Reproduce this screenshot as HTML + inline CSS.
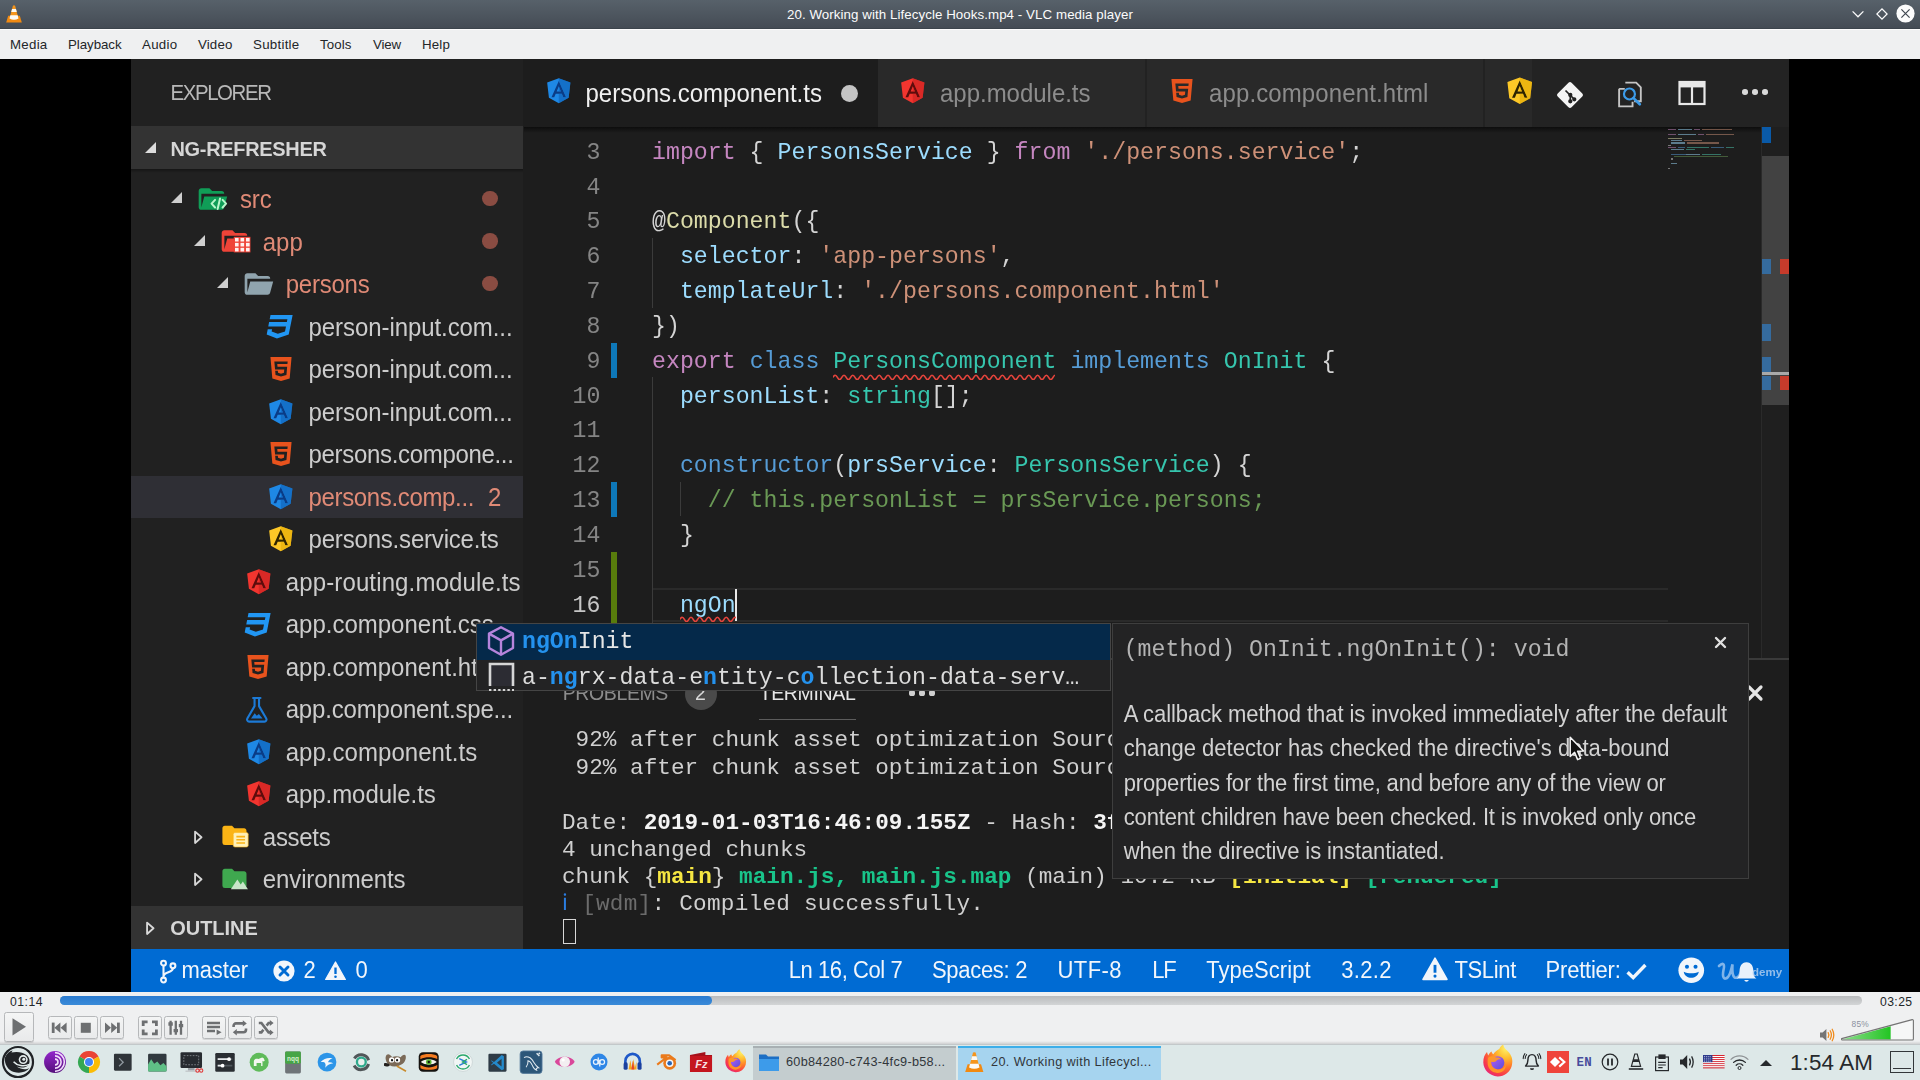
<!DOCTYPE html>
<html><head><meta charset="utf-8"><title>VLC</title>
<style>
html,body{margin:0;padding:0;background:#000;}
body{width:1920px;height:1080px;position:relative;overflow:hidden;font-family:"Liberation Sans",sans-serif;}
svg{position:absolute;overflow:visible}
#w{position:absolute;left:0;top:0;width:1920px;height:1080px;overflow:hidden;will-change:transform;filter:blur(.55px);clip-path:inset(59px 0 88px 0);}
</style></head><body>
<div style="position:absolute;left:0px;top:0px;width:1920px;height:29px;background:linear-gradient(#57616a,#444b54);"></div>
<div style="position:absolute;left:0px;top:29px;width:1920px;height:30px;background:#eff0f1;"></div>
<div style="position:absolute;left:0px;top:29px;width:1920px;height:1px;background:#fbfbfb;"></div>
<span style="position:absolute;left:787px;top:7.74px;font:400 13.3px/1 'Liberation Sans',sans-serif;color:#fcfcfc;white-space:pre;letter-spacing:0.074px;">20. Working with Lifecycle Hooks.mp4 - VLC media player</span>
<span style="position:absolute;left:10px;top:37.74px;font:400 13.3px/1 'Liberation Sans',sans-serif;color:#232629;white-space:pre;letter-spacing:0.256px;">Media</span>
<span style="position:absolute;left:68px;top:37.74px;font:400 13.3px/1 'Liberation Sans',sans-serif;color:#232629;white-space:pre;letter-spacing:-0.059px;">Playback</span>
<span style="position:absolute;left:142px;top:37.74px;font:400 13.3px/1 'Liberation Sans',sans-serif;color:#232629;white-space:pre;letter-spacing:0.297px;">Audio</span>
<span style="position:absolute;left:198px;top:37.74px;font:400 13.3px/1 'Liberation Sans',sans-serif;color:#232629;white-space:pre;letter-spacing:0.144px;">Video</span>
<span style="position:absolute;left:253px;top:37.74px;font:400 13.3px/1 'Liberation Sans',sans-serif;color:#232629;white-space:pre;letter-spacing:0.268px;">Subtitle</span>
<span style="position:absolute;left:320px;top:37.74px;font:400 13.3px/1 'Liberation Sans',sans-serif;color:#232629;white-space:pre;letter-spacing:0.091px;">Tools</span>
<span style="position:absolute;left:373px;top:37.74px;font:400 13.3px/1 'Liberation Sans',sans-serif;color:#232629;white-space:pre;letter-spacing:-0.148px;">View</span>
<span style="position:absolute;left:422px;top:37.74px;font:400 13.3px/1 'Liberation Sans',sans-serif;color:#232629;white-space:pre;letter-spacing:0.160px;">Help</span>
<div id="w">
<div style="position:absolute;left:131px;top:59px;width:1658px;height:933px;background:#1d1d1d;"></div>
<div style="position:absolute;left:131px;top:59px;width:392.3px;height:891px;background:#212121;"></div>
<span style="position:absolute;left:170.5px;top:83.13px;font:400 20.4px/1 'Liberation Sans',sans-serif;color:#b8b8b8;white-space:pre;letter-spacing:-1.383px;transform:scaleY(1.05);transform-origin:0 84.65%;">EXPLORER</span>
<div style="position:absolute;left:131px;top:126px;width:392.3px;height:43px;background:#333333;"></div>
<div style="position:absolute;left:131px;top:169px;width:392.3px;height:4px;background:linear-gradient(rgba(0,0,0,.35),rgba(0,0,0,0));"></div>
<svg style="left:145px;top:141.7px;" width="11" height="11" viewBox="0 0 10 10"><path d="M10 0 V10 H0Z" fill="#dcdcdc"/></svg>
<span style="position:absolute;left:170.5px;top:139.37px;font:700 20px/1 'Liberation Sans',sans-serif;color:#d6d6d6;white-space:pre;letter-spacing:-0.335px;transform:scaleY(1.05);transform-origin:0 84.65%;">NG-REFRESHER</span>
<div style="position:absolute;left:131px;top:475.5px;width:392.3px;height:42px;background:#2f2f35;"></div>
<svg style="left:171.0px;top:192.3px;" width="11" height="11" viewBox="0 0 10 10"><path d="M10 0 V10 H0Z" fill="#cfcfcf"/></svg>
<svg style="left:196.01258840169731px;top:182.92517680339463px;" width="34.93635077793493" height="32.248939179632245" viewBox="0 0 26 24"><path d="M19 20 H4 C2.89 20 2 19.1 2 18 V6 C2 4.89 2.89 4 4 4 H10 L12 6 H19 A2 2 0 0 1 21 8 H4 V18 L6.14 10 H23.21 L20.93 18.5 C20.7 19.37 19.92 20 19 20Z" fill="#109d57"/><g fill="none" stroke="#b9f6ca" stroke-width="1.5" stroke-linecap="round" stroke-linejoin="round"><path d="M14.2 12.6 L11.6 15.4 14.2 18.2"/><path d="M19.8 12.6 L22.4 15.4 19.8 18.2"/><path d="M17.9 11.6 L16.1 19.4"/></g></svg>
<div style="position:absolute;left:482px;top:190.60000000000002px;width:15.6px;height:15.6px;background:#8a4c42;border-radius:50%"></div>
<span style="position:absolute;left:240.0px;top:187.98px;font:400 24px/1 'Liberation Sans',sans-serif;color:#e08a76;white-space:pre;letter-spacing:-0.167px;transform:scaleY(1.05);transform-origin:0 84.65%;">src</span>
<svg style="left:193.85000000000002px;top:234.83px;" width="11" height="11" viewBox="0 0 10 10"><path d="M10 0 V10 H0Z" fill="#cfcfcf"/></svg>
<svg style="left:218.86258840169734px;top:225.45517680339464px;" width="34.93635077793493" height="32.248939179632245" viewBox="0 0 26 24"><path d="M19 20 H4 C2.89 20 2 19.1 2 18 V6 C2 4.89 2.89 4 4 4 H10 L12 6 H19 A2 2 0 0 1 21 8 H4 V18 L6.14 10 H23.21 L20.93 18.5 C20.7 19.37 19.92 20 19 20Z" fill="#ef4438"/><rect x="11" y="8.8" width="12.4" height="11.6" fill="#ef4438"/><rect x="11.9" y="9.6" width="2.7" height="2.7" fill="#fff0ee"/><rect x="11.9" y="13.3" width="2.7" height="2.7" fill="#fff0ee"/><rect x="11.9" y="17.0" width="2.7" height="2.7" fill="#fff0ee"/><rect x="16.0" y="9.6" width="2.7" height="2.7" fill="#fff0ee"/><rect x="16.0" y="13.3" width="2.7" height="2.7" fill="#fff0ee"/><rect x="16.0" y="17.0" width="2.7" height="2.7" fill="#fff0ee"/><rect x="20.1" y="9.6" width="2.7" height="2.7" fill="#fff0ee"/><rect x="20.1" y="13.3" width="2.7" height="2.7" fill="#fff0ee"/><rect x="20.1" y="17.0" width="2.7" height="2.7" fill="#fff0ee"/></svg>
<div style="position:absolute;left:482px;top:233.13000000000002px;width:15.6px;height:15.6px;background:#8a4c42;border-radius:50%"></div>
<span style="position:absolute;left:262.85px;top:230.51px;font:400 24px/1 'Liberation Sans',sans-serif;color:#e08a76;white-space:pre;letter-spacing:-0.082px;transform:scaleY(1.05);transform-origin:0 84.65%;">app</span>
<svg style="left:216.7px;top:277.36px;" width="11" height="11" viewBox="0 0 10 10"><path d="M10 0 V10 H0Z" fill="#cfcfcf"/></svg>
<svg style="left:241.7125884016973px;top:267.98517680339467px;" width="34.93635077793493" height="32.248939179632245" viewBox="0 0 26 24"><path d="M19 20 H4 C2.89 20 2 19.1 2 18 V6 C2 4.89 2.89 4 4 4 H10 L12 6 H19 A2 2 0 0 1 21 8 H4 V18 L6.14 10 H23.21 L20.93 18.5 C20.7 19.37 19.92 20 19 20Z" fill="#90a4ae"/></svg>
<div style="position:absolute;left:482px;top:275.66px;width:15.6px;height:15.6px;background:#8a4c42;border-radius:50%"></div>
<span style="position:absolute;left:285.7px;top:273.04px;font:400 24px/1 'Liberation Sans',sans-serif;color:#e08a76;white-space:pre;letter-spacing:-0.227px;transform:scaleY(1.05);transform-origin:0 84.65%;">persons</span>
<svg style="left:264.36055555555555px;top:310.9733333333333px;" width="31.333333333333336" height="31.333333333333336" viewBox="0 0 24 24"><path d="M5 3 L4.35 6.34 H17.94 L17.5 8.5 H3.92 L3.26 11.83 H16.85 L16.09 15.64 10.61 17.45 5.86 15.64 6.19 14 H2.85 L2.06 18 9.91 21 18.96 18 20.16 11.97 20.4 10.76 21.94 3Z" fill="#2196f3"/></svg>
<span style="position:absolute;left:308.55px;top:315.57px;font:400 24px/1 'Liberation Sans',sans-serif;color:#cccccc;white-space:pre;letter-spacing:-0.076px;transform:scaleY(1.05);transform-origin:0 84.65%;">person-input.com...</span>
<svg style="left:265.12333333333333px;top:352.92px;" width="32.0" height="32.0" viewBox="0 0 24 24"><path d="M4.07 3 H19.93 L18.5 19.2 12 21 5.5 19.2Z M12 17.56 L16.07 16.43 16.62 10.33 H9.38 L9.2 8.3 H16.8 L17 6.31 H7 L7.56 12.32 H14.45 L14.22 14.9 12 15.5 9.78 14.9 9.64 13.24 H7.64 L7.93 16.43Z" fill="#e8531d" fill-rule="evenodd"/></svg>
<span style="position:absolute;left:308.55px;top:358.10px;font:400 24px/1 'Liberation Sans',sans-serif;color:#cccccc;white-space:pre;letter-spacing:-0.076px;transform:scaleY(1.05);transform-origin:0 84.65%;">person-input.com...</span>
<svg style="left:265.39210526315793px;top:395.6605263157895px;" width="31.578947368421055" height="31.578947368421055" viewBox="0 0 24 24"><path d="M12 3.5 L19.8 6.3 18.6 16.8 12 20.4 5.4 16.8 4.2 6.3Z" fill="#0a3c86"/><path d="M12 2.5 L20.84 5.65 19.5 17.35 12 21.5 4.5 17.35 3.16 5.65Z M12 4.6 L6.47 17 H8.53 L9.64 14.22 H14.34 L15.45 17 H17.5Z M13.62 12.5 H10.39 L12 8.63Z" fill="#1e88e5" fill-rule="evenodd"/><path d="M12 2.5 L20.84 5.65 19.5 17.35 12 21.5 V17 h5.5 L12 4.6Z M12 8.63 L13.62 12.5 H12Z M12 14.22 h2.34 L15.45 17 H12Z" fill="#0d5cb0" fill-rule="evenodd" opacity=".55"/></svg>
<span style="position:absolute;left:308.55px;top:400.63px;font:400 24px/1 'Liberation Sans',sans-serif;color:#cccccc;white-space:pre;letter-spacing:-0.076px;transform:scaleY(1.05);transform-origin:0 84.65%;">person-input.com...</span>
<svg style="left:265.12333333333333px;top:437.98px;" width="32.0" height="32.0" viewBox="0 0 24 24"><path d="M4.07 3 H19.93 L18.5 19.2 12 21 5.5 19.2Z M12 17.56 L16.07 16.43 16.62 10.33 H9.38 L9.2 8.3 H16.8 L17 6.31 H7 L7.56 12.32 H14.45 L14.22 14.9 12 15.5 9.78 14.9 9.64 13.24 H7.64 L7.93 16.43Z" fill="#e8531d" fill-rule="evenodd"/></svg>
<span style="position:absolute;left:308.55px;top:443.16px;font:400 24px/1 'Liberation Sans',sans-serif;color:#cccccc;white-space:pre;letter-spacing:-0.322px;transform:scaleY(1.05);transform-origin:0 84.65%;">persons.compone...</span>
<svg style="left:265.39210526315793px;top:480.7205263157895px;" width="31.578947368421055" height="31.578947368421055" viewBox="0 0 24 24"><path d="M12 3.5 L19.8 6.3 18.6 16.8 12 20.4 5.4 16.8 4.2 6.3Z" fill="#0a3c86"/><path d="M12 2.5 L20.84 5.65 19.5 17.35 12 21.5 4.5 17.35 3.16 5.65Z M12 4.6 L6.47 17 H8.53 L9.64 14.22 H14.34 L15.45 17 H17.5Z M13.62 12.5 H10.39 L12 8.63Z" fill="#1e88e5" fill-rule="evenodd"/><path d="M12 2.5 L20.84 5.65 19.5 17.35 12 21.5 V17 h5.5 L12 4.6Z M12 8.63 L13.62 12.5 H12Z M12 14.22 h2.34 L15.45 17 H12Z" fill="#0d5cb0" fill-rule="evenodd" opacity=".55"/></svg>
<span style="position:absolute;left:308.55px;top:485.69px;font:400 24px/1 'Liberation Sans',sans-serif;color:#e08a76;white-space:pre;letter-spacing:-0.350px;transform:scaleY(1.05);transform-origin:0 84.65%;">persons.comp...</span>
<svg style="left:265.39210526315793px;top:523.2505263157894px;" width="31.578947368421055" height="31.578947368421055" viewBox="0 0 24 24"><path d="M12 3.5 L19.8 6.3 18.6 16.8 12 20.4 5.4 16.8 4.2 6.3Z" fill="#2e2400"/><path d="M12 2.5 L20.84 5.65 19.5 17.35 12 21.5 4.5 17.35 3.16 5.65Z M12 4.6 L6.47 17 H8.53 L9.64 14.22 H14.34 L15.45 17 H17.5Z M13.62 12.5 H10.39 L12 8.63Z" fill="#fdc827" fill-rule="evenodd"/><path d="M12 2.5 L20.84 5.65 19.5 17.35 12 21.5 V17 h5.5 L12 4.6Z M12 8.63 L13.62 12.5 H12Z M12 14.22 h2.34 L15.45 17 H12Z" fill="#e0a800" fill-rule="evenodd" opacity=".55"/></svg>
<span style="position:absolute;left:308.55px;top:528.22px;font:400 24px/1 'Liberation Sans',sans-serif;color:#cccccc;white-space:pre;letter-spacing:-0.189px;transform:scaleY(1.05);transform-origin:0 84.65%;">persons.service.ts</span>
<svg style="left:242.54210526315788px;top:565.7805263157894px;" width="31.578947368421055" height="31.578947368421055" viewBox="0 0 24 24"><path d="M12 3.5 L19.8 6.3 18.6 16.8 12 20.4 5.4 16.8 4.2 6.3Z" fill="#5e0c0c"/><path d="M12 2.5 L20.84 5.65 19.5 17.35 12 21.5 4.5 17.35 3.16 5.65Z M12 4.6 L6.47 17 H8.53 L9.64 14.22 H14.34 L15.45 17 H17.5Z M13.62 12.5 H10.39 L12 8.63Z" fill="#f2352f" fill-rule="evenodd"/><path d="M12 2.5 L20.84 5.65 19.5 17.35 12 21.5 V17 h5.5 L12 4.6Z M12 8.63 L13.62 12.5 H12Z M12 14.22 h2.34 L15.45 17 H12Z" fill="#c41f1f" fill-rule="evenodd" opacity=".55"/></svg>
<span style="position:absolute;left:285.7px;top:570.75px;font:400 24px/1 'Liberation Sans',sans-serif;color:#cccccc;white-space:pre;letter-spacing:0.136px;transform:scaleY(1.05);transform-origin:0 84.65%;">app-routing.module.ts</span>
<svg style="left:241.51055555555556px;top:608.6833333333334px;" width="31.333333333333336" height="31.333333333333336" viewBox="0 0 24 24"><path d="M5 3 L4.35 6.34 H17.94 L17.5 8.5 H3.92 L3.26 11.83 H16.85 L16.09 15.64 10.61 17.45 5.86 15.64 6.19 14 H2.85 L2.06 18 9.91 21 18.96 18 20.16 11.97 20.4 10.76 21.94 3Z" fill="#2196f3"/></svg>
<span style="position:absolute;left:285.7px;top:613.28px;font:400 24px/1 'Liberation Sans',sans-serif;color:#cccccc;white-space:pre;transform:scaleY(1.05);transform-origin:0 84.65%;">app.component.css</span>
<svg style="left:242.2733333333333px;top:650.6300000000001px;" width="32.0" height="32.0" viewBox="0 0 24 24"><path d="M4.07 3 H19.93 L18.5 19.2 12 21 5.5 19.2Z M12 17.56 L16.07 16.43 16.62 10.33 H9.38 L9.2 8.3 H16.8 L17 6.31 H7 L7.56 12.32 H14.45 L14.22 14.9 12 15.5 9.78 14.9 9.64 13.24 H7.64 L7.93 16.43Z" fill="#e8531d" fill-rule="evenodd"/></svg>
<span style="position:absolute;left:285.7px;top:655.81px;font:400 24px/1 'Liberation Sans',sans-serif;color:#cccccc;white-space:pre;transform:scaleY(1.05);transform-origin:0 84.65%;">app.component.html</span>
<svg style="left:241.43684210526314px;top:693.7652631578948px;" width="31.578947368421055" height="31.578947368421055" viewBox="0 0 24 24"><path d="M9.2 3 H14.8 M10.3 3 V9.2 L4.8 18.6 A1.6 1.6 0 0 0 6.2 21 H17.8 A1.6 1.6 0 0 0 19.2 18.6 L13.7 9.2 V3" fill="none" stroke="#1c7ad6" stroke-width="1.6" stroke-linejoin="round" stroke-linecap="round"/><path d="M7.6 18.6 L10.4 14.6 12 16.6 13.6 15.2 16.4 18.6Z" fill="#1c7ad6"/></svg>
<span style="position:absolute;left:285.7px;top:698.34px;font:400 24px/1 'Liberation Sans',sans-serif;color:#cccccc;white-space:pre;letter-spacing:-0.171px;transform:scaleY(1.05);transform-origin:0 84.65%;">app.component.spe...</span>
<svg style="left:242.54210526315788px;top:735.9005263157895px;" width="31.578947368421055" height="31.578947368421055" viewBox="0 0 24 24"><path d="M12 3.5 L19.8 6.3 18.6 16.8 12 20.4 5.4 16.8 4.2 6.3Z" fill="#0a3c86"/><path d="M12 2.5 L20.84 5.65 19.5 17.35 12 21.5 4.5 17.35 3.16 5.65Z M12 4.6 L6.47 17 H8.53 L9.64 14.22 H14.34 L15.45 17 H17.5Z M13.62 12.5 H10.39 L12 8.63Z" fill="#1e88e5" fill-rule="evenodd"/><path d="M12 2.5 L20.84 5.65 19.5 17.35 12 21.5 V17 h5.5 L12 4.6Z M12 8.63 L13.62 12.5 H12Z M12 14.22 h2.34 L15.45 17 H12Z" fill="#0d5cb0" fill-rule="evenodd" opacity=".55"/></svg>
<span style="position:absolute;left:285.7px;top:740.87px;font:400 24px/1 'Liberation Sans',sans-serif;color:#cccccc;white-space:pre;letter-spacing:0.044px;transform:scaleY(1.05);transform-origin:0 84.65%;">app.component.ts</span>
<svg style="left:242.54210526315788px;top:778.4305263157895px;" width="31.578947368421055" height="31.578947368421055" viewBox="0 0 24 24"><path d="M12 3.5 L19.8 6.3 18.6 16.8 12 20.4 5.4 16.8 4.2 6.3Z" fill="#5e0c0c"/><path d="M12 2.5 L20.84 5.65 19.5 17.35 12 21.5 4.5 17.35 3.16 5.65Z M12 4.6 L6.47 17 H8.53 L9.64 14.22 H14.34 L15.45 17 H17.5Z M13.62 12.5 H10.39 L12 8.63Z" fill="#f2352f" fill-rule="evenodd"/><path d="M12 2.5 L20.84 5.65 19.5 17.35 12 21.5 V17 h5.5 L12 4.6Z M12 8.63 L13.62 12.5 H12Z M12 14.22 h2.34 L15.45 17 H12Z" fill="#c41f1f" fill-rule="evenodd" opacity=".55"/></svg>
<span style="position:absolute;left:285.7px;top:783.40px;font:400 24px/1 'Liberation Sans',sans-serif;color:#cccccc;white-space:pre;letter-spacing:-0.059px;transform:scaleY(1.05);transform-origin:0 84.65%;">app.module.ts</span>
<svg style="left:194.05px;top:829.95px;" width="8.6" height="14.6" viewBox="0 0 8 13"><path d="M1 1.2 L7 6.5 1 11.8Z" fill="none" stroke="#d6d6d6" stroke-width="1.7" stroke-linejoin="round"/></svg>
<svg style="left:219.74090909090913px;top:821.4318181818181px;" width="31.31818181818182" height="28.90909090909091" viewBox="0 0 26 24"><path d="M10 4 H4 C2.89 4 2 4.89 2 6 V18 A2 2 0 0 0 4 20 H20 A2 2 0 0 0 22 18 V8 C22 6.89 21.1 6 20 6 H12Z" fill="#fbb415"/><rect x="11" y="9.6" width="12.4" height="12" rx="1.4" fill="#fff1b8" stroke="#fbb415" stroke-width=".5"/><path d="M13.6 13 h7.2 M13.6 15.6 h7.2 M13.6 18.2 h7.2" stroke="#fbb415" stroke-width="1.3"/></svg>
<span style="position:absolute;left:262.85px;top:825.93px;font:400 24px/1 'Liberation Sans',sans-serif;color:#cccccc;white-space:pre;letter-spacing:-0.312px;transform:scaleY(1.05);transform-origin:0 84.65%;">assets</span>
<svg style="left:194.05px;top:872.48px;" width="8.6" height="14.6" viewBox="0 0 8 13"><path d="M1 1.2 L7 6.5 1 11.8Z" fill="none" stroke="#d6d6d6" stroke-width="1.7" stroke-linejoin="round"/></svg>
<svg style="left:219.74090909090913px;top:863.9618181818181px;" width="31.31818181818182" height="28.90909090909091" viewBox="0 0 26 24"><path d="M10 4 H4 C2.89 4 2 4.89 2 6 V18 A2 2 0 0 0 4 20 H20 A2 2 0 0 0 22 18 V8 C22 6.89 21.1 6 20 6 H12Z" fill="#3fa84f"/><path d="M9 21 L14.4 12.8 17.2 17 19 14.6 23.2 21Z" fill="#c8e6c9"/></svg>
<span style="position:absolute;left:262.85px;top:868.46px;font:400 24px/1 'Liberation Sans',sans-serif;color:#cccccc;white-space:pre;letter-spacing:-0.132px;transform:scaleY(1.05);transform-origin:0 84.65%;">environments</span>
<span style="position:absolute;left:488px;top:485.69px;font:400 24px/1 'Liberation Sans',sans-serif;color:#e08a76;white-space:pre;letter-spacing:-1.859px;transform:scaleY(1.05);transform-origin:0 84.65%;">2</span>
<div style="position:absolute;left:131px;top:906px;width:392.3px;height:44px;background:#333333;"></div>
<svg style="left:145.6px;top:920.8px;" width="8.6" height="14.6" viewBox="0 0 8 13"><path d="M1 1.2 L7 6.5 1 11.8Z" fill="none" stroke="#dadada" stroke-width="1.7" stroke-linejoin="round"/></svg>
<span style="position:absolute;left:170.2px;top:918.07px;font:700 20px/1 'Liberation Sans',sans-serif;color:#d6d6d6;white-space:pre;letter-spacing:-0.026px;transform:scaleY(1.05);transform-origin:0 84.65%;">OUTLINE</span>
<div style="position:absolute;left:524px;top:59px;width:1265px;height:68px;background:#262626;"></div>
<div style="position:absolute;left:524px;top:59px;width:354px;height:68px;background:#1d1d1d;"></div>
<div style="position:absolute;left:878px;top:59px;width:268px;height:68px;background:#292929;"></div>
<div style="position:absolute;left:1146px;top:59px;width:338px;height:68px;background:#292929;"></div>
<div style="position:absolute;left:1484px;top:59px;width:48px;height:68px;background:#292929;"></div>
<div style="position:absolute;left:1145px;top:59px;width:1.5px;height:68px;background:#222;"></div>
<div style="position:absolute;left:1483px;top:59px;width:1.5px;height:68px;background:#222;"></div>
<div style="position:absolute;left:1532px;top:59px;width:257px;height:68px;background:#232323;"></div>
<svg style="left:542.8421052631579px;top:75.21052631578948px;" width="31.578947368421055" height="31.578947368421055" viewBox="0 0 24 24"><path d="M12 3.5 L19.8 6.3 18.6 16.8 12 20.4 5.4 16.8 4.2 6.3Z" fill="#0a3c86"/><path d="M12 2.5 L20.84 5.65 19.5 17.35 12 21.5 4.5 17.35 3.16 5.65Z M12 4.6 L6.47 17 H8.53 L9.64 14.22 H14.34 L15.45 17 H17.5Z M13.62 12.5 H10.39 L12 8.63Z" fill="#1e88e5" fill-rule="evenodd"/><path d="M12 2.5 L20.84 5.65 19.5 17.35 12 21.5 V17 h5.5 L12 4.6Z M12 8.63 L13.62 12.5 H12Z M12 14.22 h2.34 L15.45 17 H12Z" fill="#0d5cb0" fill-rule="evenodd" opacity=".55"/></svg>
<span style="position:absolute;left:585.5px;top:81.98px;font:400 24px/1 'Liberation Sans',sans-serif;color:#f0f0f0;white-space:pre;letter-spacing:0.018px;transform:scaleY(1.05);transform-origin:0 84.65%;">persons.component.ts</span>
<div style="position:absolute;left:841px;top:84.5px;width:17px;height:17px;background:#c4c4c4;border-radius:50%"></div>
<svg style="left:896.8421052631579px;top:75.21052631578948px;" width="31.578947368421055" height="31.578947368421055" viewBox="0 0 24 24"><path d="M12 3.5 L19.8 6.3 18.6 16.8 12 20.4 5.4 16.8 4.2 6.3Z" fill="#5e0c0c"/><path d="M12 2.5 L20.84 5.65 19.5 17.35 12 21.5 4.5 17.35 3.16 5.65Z M12 4.6 L6.47 17 H8.53 L9.64 14.22 H14.34 L15.45 17 H17.5Z M13.62 12.5 H10.39 L12 8.63Z" fill="#f2352f" fill-rule="evenodd"/><path d="M12 2.5 L20.84 5.65 19.5 17.35 12 21.5 V17 h5.5 L12 4.6Z M12 8.63 L13.62 12.5 H12Z M12 14.22 h2.34 L15.45 17 H12Z" fill="#c41f1f" fill-rule="evenodd" opacity=".55"/></svg>
<span style="position:absolute;left:940px;top:81.98px;font:400 24px/1 'Liberation Sans',sans-serif;color:#8c8c8c;white-space:pre;letter-spacing:-0.020px;transform:scaleY(1.05);transform-origin:0 84.65%;">app.module.ts</span>
<svg style="left:1165.5733333333333px;top:75.0px;" width="32.0" height="32.0" viewBox="0 0 24 24"><path d="M4.07 3 H19.93 L18.5 19.2 12 21 5.5 19.2Z M12 17.56 L16.07 16.43 16.62 10.33 H9.38 L9.2 8.3 H16.8 L17 6.31 H7 L7.56 12.32 H14.45 L14.22 14.9 12 15.5 9.78 14.9 9.64 13.24 H7.64 L7.93 16.43Z" fill="#e8531d" fill-rule="evenodd"/></svg>
<span style="position:absolute;left:1209px;top:81.98px;font:400 24px/1 'Liberation Sans',sans-serif;color:#8c8c8c;white-space:pre;letter-spacing:0.113px;transform:scaleY(1.05);transform-origin:0 84.65%;">app.component.html</span>
<svg style="left:1503.0926315789475px;top:73.51315789473685px;" width="33.473684210526315" height="33.473684210526315" viewBox="0 0 24 24"><path d="M12 3.5 L19.8 6.3 18.6 16.8 12 20.4 5.4 16.8 4.2 6.3Z" fill="#2e2400"/><path d="M12 2.5 L20.84 5.65 19.5 17.35 12 21.5 4.5 17.35 3.16 5.65Z M12 4.6 L6.47 17 H8.53 L9.64 14.22 H14.34 L15.45 17 H17.5Z M13.62 12.5 H10.39 L12 8.63Z" fill="#fdc827" fill-rule="evenodd"/><path d="M12 2.5 L20.84 5.65 19.5 17.35 12 21.5 V17 h5.5 L12 4.6Z M12 8.63 L13.62 12.5 H12Z M12 14.22 h2.34 L15.45 17 H12Z" fill="#e0a800" fill-rule="evenodd" opacity=".55"/></svg>
<svg style="left:1555px;top:80px;" width="30" height="30" viewBox="0 0 30 30"><rect x="5.2" y="5.2" width="19.6" height="19.6" rx="2.2" transform="rotate(45 15 15)" fill="#f4f4f4"/><g stroke="#232323" stroke-width="1.7" fill="#232323"><path d="M10.5 10.5 L19.5 19.5" /><path d="M15.3 15 V21.5"/><circle cx="15.3" cy="15" r="1.3"/><circle cx="15.3" cy="21.3" r="1.3"/><circle cx="19.3" cy="19.3" r="1.3"/></g></svg>
<svg style="left:1614.5px;top:78.5px;" width="32" height="31" viewBox="0 0 30 30"><path d="M9.5 3.5 H20 L24.5 8 V21.5 H18" fill="none" stroke="#c5c5c5" stroke-width="1.8"/><path d="M3.5 9.5 H9 M3.5 9.5 V26.5 H16.5 V22" fill="none" stroke="#c5c5c5" stroke-width="1.8"/><circle cx="13.5" cy="14.5" r="5.3" fill="none" stroke="#3c9be8" stroke-width="2.1"/><path d="M17.5 18.5 L23.5 24.5" stroke="#3c9be8" stroke-width="2.6" stroke-linecap="round"/></svg>
<svg style="left:1678px;top:80px;" width="28" height="26" viewBox="0 0 28 26"><rect x="1.5" y="2" width="25" height="22" fill="none" stroke="#e8e8e8" stroke-width="2.2"/><path d="M1.5 5.2 H26.5" stroke="#e8e8e8" stroke-width="4.4"/><path d="M14 3 V24" stroke="#e8e8e8" stroke-width="2.2"/></svg>
<div style="position:absolute;left:1742.2px;top:89.2px;width:5.6px;height:5.6px;background:#d8d8d8;border-radius:50%"></div>
<div style="position:absolute;left:1752.2px;top:89.2px;width:5.6px;height:5.6px;background:#d8d8d8;border-radius:50%"></div>
<div style="position:absolute;left:1762.2px;top:89.2px;width:5.6px;height:5.6px;background:#d8d8d8;border-radius:50%"></div>
<div style="position:absolute;left:524px;top:127px;width:1237px;height:6px;background:linear-gradient(rgba(0,0,0,.55),rgba(0,0,0,0));"></div>
<span style="position:absolute;left:586.555px;top:141.72px;font:400 23.2px/1 'Liberation Mono',monospace;color:#858585;white-space:pre;letter-spacing:0.023px;">3</span>
<span style="position:absolute;left:652.0px;top:141.72px;font:400 23.2px/1 'Liberation Mono',monospace;color:#d4d4d4;white-space:pre;letter-spacing:0.029px;"><span style="color:#c586c0">import</span><span style="color:#d4d4d4"> { </span><span style="color:#9cdcfe">PersonsService</span><span style="color:#d4d4d4"> } </span><span style="color:#c586c0">from</span><span style="color:#d4d4d4"> </span><span style="color:#ce9178">&#x27;./persons.service&#x27;</span><span style="color:#d4d4d4">;</span></span>
<span style="position:absolute;left:586.555px;top:176.56px;font:400 23.2px/1 'Liberation Mono',monospace;color:#858585;white-space:pre;letter-spacing:0.023px;">4</span>
<span style="position:absolute;left:586.555px;top:211.40px;font:400 23.2px/1 'Liberation Mono',monospace;color:#858585;white-space:pre;letter-spacing:0.023px;">5</span>
<span style="position:absolute;left:652.0px;top:211.40px;font:400 23.2px/1 'Liberation Mono',monospace;color:#d4d4d4;white-space:pre;letter-spacing:0.028px;"><span style="color:#d4d4d4">@</span><span style="color:#dcdcaa">Component</span><span style="color:#d4d4d4">({</span></span>
<span style="position:absolute;left:586.555px;top:246.24px;font:400 23.2px/1 'Liberation Mono',monospace;color:#858585;white-space:pre;letter-spacing:0.023px;">6</span>
<span style="position:absolute;left:652.0px;top:246.24px;font:400 23.2px/1 'Liberation Mono',monospace;color:#d4d4d4;white-space:pre;letter-spacing:0.028px;"><span style="color:#d4d4d4">  </span><span style="color:#9cdcfe">selector</span><span style="color:#d4d4d4">: </span><span style="color:#ce9178">&#x27;app-persons&#x27;</span><span style="color:#d4d4d4">,</span></span>
<span style="position:absolute;left:586.555px;top:281.08px;font:400 23.2px/1 'Liberation Mono',monospace;color:#858585;white-space:pre;letter-spacing:0.023px;">7</span>
<span style="position:absolute;left:652.0px;top:281.08px;font:400 23.2px/1 'Liberation Mono',monospace;color:#d4d4d4;white-space:pre;letter-spacing:0.029px;"><span style="color:#d4d4d4">  </span><span style="color:#9cdcfe">templateUrl</span><span style="color:#d4d4d4">: </span><span style="color:#ce9178">&#x27;./persons.component.html&#x27;</span></span>
<span style="position:absolute;left:586.555px;top:315.92px;font:400 23.2px/1 'Liberation Mono',monospace;color:#858585;white-space:pre;letter-spacing:0.023px;">8</span>
<span style="position:absolute;left:652.0px;top:315.92px;font:400 23.2px/1 'Liberation Mono',monospace;color:#d4d4d4;white-space:pre;letter-spacing:0.023px;"><span style="color:#d4d4d4">})</span></span>
<span style="position:absolute;left:586.555px;top:350.76px;font:400 23.2px/1 'Liberation Mono',monospace;color:#858585;white-space:pre;letter-spacing:0.023px;">9</span>
<span style="position:absolute;left:652.0px;top:350.76px;font:400 23.2px/1 'Liberation Mono',monospace;color:#d4d4d4;white-space:pre;letter-spacing:0.029px;"><span style="color:#c586c0">export</span><span style="color:#d4d4d4"> </span><span style="color:#569cd6">class</span><span style="color:#d4d4d4"> </span><span style="color:#36c6ae">PersonsComponent</span><span style="color:#d4d4d4"> </span><span style="color:#569cd6">implements</span><span style="color:#d4d4d4"> </span><span style="color:#36c6ae">OnInit</span><span style="color:#d4d4d4"> {</span></span>
<span style="position:absolute;left:572.61px;top:385.60px;font:400 23.2px/1 'Liberation Mono',monospace;color:#858585;white-space:pre;letter-spacing:0.023px;">10</span>
<span style="position:absolute;left:652.0px;top:385.60px;font:400 23.2px/1 'Liberation Mono',monospace;color:#d4d4d4;white-space:pre;letter-spacing:0.028px;"><span style="color:#d4d4d4">  </span><span style="color:#9cdcfe">personList</span><span style="color:#d4d4d4">: </span><span style="color:#36c6ae">string</span><span style="color:#d4d4d4">[];</span></span>
<span style="position:absolute;left:572.61px;top:420.44px;font:400 23.2px/1 'Liberation Mono',monospace;color:#858585;white-space:pre;letter-spacing:0.023px;">11</span>
<span style="position:absolute;left:572.61px;top:455.28px;font:400 23.2px/1 'Liberation Mono',monospace;color:#858585;white-space:pre;letter-spacing:0.023px;">12</span>
<span style="position:absolute;left:652.0px;top:455.28px;font:400 23.2px/1 'Liberation Mono',monospace;color:#d4d4d4;white-space:pre;letter-spacing:0.029px;"><span style="color:#d4d4d4">  </span><span style="color:#569cd6">constructor</span><span style="color:#d4d4d4">(</span><span style="color:#9cdcfe">prsService</span><span style="color:#d4d4d4">: </span><span style="color:#36c6ae">PersonsService</span><span style="color:#d4d4d4">) {</span></span>
<span style="position:absolute;left:572.61px;top:490.12px;font:400 23.2px/1 'Liberation Mono',monospace;color:#858585;white-space:pre;letter-spacing:0.023px;">13</span>
<span style="position:absolute;left:652.0px;top:490.12px;font:400 23.2px/1 'Liberation Mono',monospace;color:#d4d4d4;white-space:pre;letter-spacing:0.030px;"><span style="color:#d4d4d4">    </span><span style="color:#6a9955">// this.personList = prsService.persons;</span></span>
<span style="position:absolute;left:572.61px;top:524.96px;font:400 23.2px/1 'Liberation Mono',monospace;color:#858585;white-space:pre;letter-spacing:0.023px;">14</span>
<span style="position:absolute;left:652.0px;top:524.96px;font:400 23.2px/1 'Liberation Mono',monospace;color:#d4d4d4;white-space:pre;letter-spacing:0.028px;"><span style="color:#d4d4d4">  }</span></span>
<span style="position:absolute;left:572.61px;top:559.80px;font:400 23.2px/1 'Liberation Mono',monospace;color:#858585;white-space:pre;letter-spacing:0.023px;">15</span>
<span style="position:absolute;left:572.61px;top:594.64px;font:400 23.2px/1 'Liberation Mono',monospace;color:#c6c6c6;white-space:pre;letter-spacing:0.023px;">16</span>
<span style="position:absolute;left:652.0px;top:594.64px;font:400 23.2px/1 'Liberation Mono',monospace;color:#d4d4d4;white-space:pre;letter-spacing:0.026px;"><span style="color:#d4d4d4">  </span><span style="color:#9cdcfe">ngOn</span></span>
<div style="position:absolute;left:653px;top:588.3px;width:1015px;height:1.8px;background:#2a2a2a;"></div>
<div style="position:absolute;left:653px;top:620px;width:1015px;height:1.8px;background:#2a2a2a;"></div>
<div style="position:absolute;left:652px;top:238px;width:1.2px;height:70px;background:#3b3b3b;"></div>
<div style="position:absolute;left:652px;top:377px;width:1.2px;height:247px;background:#3b3b3b;"></div>
<div style="position:absolute;left:680px;top:482px;width:1.2px;height:34px;background:#3b3b3b;"></div>
<div style="position:absolute;left:610.5px;top:343px;width:6.5px;height:35px;background:#0e78b9;"></div>
<div style="position:absolute;left:610.5px;top:482px;width:6.5px;height:35px;background:#0e78b9;"></div>
<div style="position:absolute;left:610.5px;top:552px;width:6.5px;height:72px;background:#587c0c;"></div>
<div style="position:absolute;left:735px;top:589px;width:2.2px;height:32px;background:#e8e8e8;"></div>
<svg style="left:833px;top:374px;overflow:hidden" width="222" height="6" viewBox="0 0 222 6"><path d="M0 3.4 q2.2 -4.4 4.4 0 t4.4 0 q2.2 -4.4 4.4 0 t4.4 0 q2.2 -4.4 4.4 0 t4.4 0 q2.2 -4.4 4.4 0 t4.4 0 q2.2 -4.4 4.4 0 t4.4 0 q2.2 -4.4 4.4 0 t4.4 0 q2.2 -4.4 4.4 0 t4.4 0 q2.2 -4.4 4.4 0 t4.4 0 q2.2 -4.4 4.4 0 t4.4 0 q2.2 -4.4 4.4 0 t4.4 0 q2.2 -4.4 4.4 0 t4.4 0 q2.2 -4.4 4.4 0 t4.4 0 q2.2 -4.4 4.4 0 t4.4 0 q2.2 -4.4 4.4 0 t4.4 0 q2.2 -4.4 4.4 0 t4.4 0 q2.2 -4.4 4.4 0 t4.4 0 q2.2 -4.4 4.4 0 t4.4 0 q2.2 -4.4 4.4 0 t4.4 0 q2.2 -4.4 4.4 0 t4.4 0 q2.2 -4.4 4.4 0 t4.4 0 q2.2 -4.4 4.4 0 t4.4 0 q2.2 -4.4 4.4 0 t4.4 0 q2.2 -4.4 4.4 0 t4.4 0 q2.2 -4.4 4.4 0 t4.4 0 q2.2 -4.4 4.4 0 t4.4 0 q2.2 -4.4 4.4 0 t4.4 0" fill="none" stroke="#e5443c" stroke-width="1.6"/></svg>
<svg style="left:680px;top:616px;overflow:hidden" width="56" height="6" viewBox="0 0 56 6"><path d="M0 3.4 q2.2 -4.4 4.4 0 t4.4 0 q2.2 -4.4 4.4 0 t4.4 0 q2.2 -4.4 4.4 0 t4.4 0 q2.2 -4.4 4.4 0 t4.4 0 q2.2 -4.4 4.4 0 t4.4 0 q2.2 -4.4 4.4 0 t4.4 0 q2.2 -4.4 4.4 0 t4.4 0" fill="none" stroke="#e5443c" stroke-width="1.6"/></svg>
<div style="position:absolute;left:1668px;top:129px;width:8px;height:1.2px;background:#c586c0;opacity:.5"></div>
<div style="position:absolute;left:1678px;top:129px;width:14px;height:1.2px;background:#9cdcfe;opacity:.5"></div>
<div style="position:absolute;left:1694px;top:129px;width:6px;height:1.2px;background:#c586c0;opacity:.5"></div>
<div style="position:absolute;left:1702px;top:129px;width:30px;height:1.2px;background:#ce9178;opacity:.5"></div>
<div style="position:absolute;left:1668px;top:133.5px;width:8px;height:1.2px;background:#c586c0;opacity:.5"></div>
<div style="position:absolute;left:1678px;top:133.5px;width:18px;height:1.2px;background:#9cdcfe;opacity:.5"></div>
<div style="position:absolute;left:1698px;top:133.5px;width:6px;height:1.2px;background:#c586c0;opacity:.5"></div>
<div style="position:absolute;left:1706px;top:133.5px;width:28px;height:1.2px;background:#ce9178;opacity:.5"></div>
<div style="position:absolute;left:1668px;top:138px;width:14px;height:1.2px;background:#dcdcaa;opacity:.5"></div>
<div style="position:absolute;left:1671px;top:140.2px;width:11px;height:1.2px;background:#9cdcfe;opacity:.5"></div>
<div style="position:absolute;left:1684px;top:140.2px;width:18px;height:1.2px;background:#ce9178;opacity:.5"></div>
<div style="position:absolute;left:1671px;top:142.4px;width:14px;height:1.2px;background:#9cdcfe;opacity:.5"></div>
<div style="position:absolute;left:1687px;top:142.4px;width:32px;height:1.2px;background:#ce9178;opacity:.5"></div>
<div style="position:absolute;left:1668px;top:144.6px;width:3px;height:1.2px;background:#d4d4d4;opacity:.5"></div>
<div style="position:absolute;left:1668px;top:146.8px;width:8px;height:1.2px;background:#c586c0;opacity:.5"></div>
<div style="position:absolute;left:1678px;top:146.8px;width:7px;height:1.2px;background:#569cd6;opacity:.5"></div>
<div style="position:absolute;left:1687px;top:146.8px;width:22px;height:1.2px;background:#4ec9b0;opacity:.5"></div>
<div style="position:absolute;left:1711px;top:146.8px;width:13px;height:1.2px;background:#569cd6;opacity:.5"></div>
<div style="position:absolute;left:1726px;top:146.8px;width:8px;height:1.2px;background:#4ec9b0;opacity:.5"></div>
<div style="position:absolute;left:1671px;top:149.2px;width:13px;height:1.2px;background:#9cdcfe;opacity:.5"></div>
<div style="position:absolute;left:1686px;top:149.2px;width:9px;height:1.2px;background:#4ec9b0;opacity:.5"></div>
<div style="position:absolute;left:1671px;top:153.6px;width:15px;height:1.2px;background:#569cd6;opacity:.5"></div>
<div style="position:absolute;left:1686px;top:153.6px;width:14px;height:1.2px;background:#9cdcfe;opacity:.5"></div>
<div style="position:absolute;left:1702px;top:153.6px;width:19px;height:1.2px;background:#4ec9b0;opacity:.5"></div>
<div style="position:absolute;left:1674px;top:156px;width:54px;height:1.2px;background:#6a9955;opacity:.5"></div>
<div style="position:absolute;left:1671px;top:158.4px;width:2px;height:1.2px;background:#d4d4d4;opacity:.5"></div>
<div style="position:absolute;left:1671px;top:163px;width:6px;height:1.2px;background:#9cdcfe;opacity:.5"></div>
<div style="position:absolute;left:1668px;top:167.5px;width:2px;height:1.2px;background:#d4d4d4;opacity:.5"></div>
<div style="position:absolute;left:1761.5px;top:127px;width:27.5px;height:531px;background:#1f1f1f;"></div>
<div style="position:absolute;left:1761px;top:127px;width:1px;height:531px;background:#2a2a2a;"></div>
<div style="position:absolute;left:1761.5px;top:155.5px;width:27.5px;height:249px;background:#424242;"></div>
<div style="position:absolute;left:1761.5px;top:127px;width:9.3px;height:16px;background:#0a5aa8;"></div>
<div style="position:absolute;left:1761.5px;top:259px;width:9.3px;height:15px;background:#356b9e;"></div>
<div style="position:absolute;left:1761.5px;top:323.6px;width:9.3px;height:17.19999999999999px;background:#356b9e;"></div>
<div style="position:absolute;left:1761.5px;top:357px;width:9.3px;height:14.600000000000023px;background:#356b9e;"></div>
<div style="position:absolute;left:1761.5px;top:375.5px;width:9.3px;height:14.100000000000023px;background:#356b9e;"></div>
<div style="position:absolute;left:1779.5px;top:259px;width:9.5px;height:15px;background:#c63b2b;"></div>
<div style="position:absolute;left:1779.5px;top:375.5px;width:9.5px;height:14.100000000000023px;background:#c63b2b;"></div>
<div style="position:absolute;left:1761.5px;top:372px;width:27.5px;height:3px;background:#a9a9a9;"></div>
<div style="position:absolute;left:524px;top:658px;width:1265px;height:1.5px;background:#3a3a3a;"></div>
<span style="position:absolute;left:562.7px;top:683.99px;font:400 19.5px/1 'Liberation Sans',sans-serif;color:#8c8c8c;white-space:pre;letter-spacing:-0.384px;transform:scaleY(1.05);transform-origin:0 84.65%;">PROBLEMS</span>
<div style="position:absolute;left:685px;top:678px;width:32px;height:32px;background:#4a4a4a;border-radius:50%"></div>
<span style="position:absolute;left:695px;top:684.49px;font:400 19.5px/1 'Liberation Sans',sans-serif;color:#d8d8d8;white-space:pre;letter-spacing:1.141px;transform:scaleY(1.05);transform-origin:0 84.65%;">2</span>
<span style="position:absolute;left:759.6px;top:683.99px;font:400 19.5px/1 'Liberation Sans',sans-serif;color:#e6e6e6;white-space:pre;letter-spacing:-0.351px;transform:scaleY(1.05);transform-origin:0 84.65%;">TERMINAL</span>
<div style="position:absolute;left:759px;top:719px;width:97px;height:1.3px;background:#5c5c5c;"></div>
<div style="position:absolute;left:909.4px;top:690.4px;width:5.2px;height:5.2px;background:#d0d0d0;border-radius:50%"></div>
<div style="position:absolute;left:919.4px;top:690.4px;width:5.2px;height:5.2px;background:#d0d0d0;border-radius:50%"></div>
<div style="position:absolute;left:929.4px;top:690.4px;width:5.2px;height:5.2px;background:#d0d0d0;border-radius:50%"></div>
<svg style="left:1746px;top:684px;" width="18" height="18" viewBox="0 0 18 18"><path d="M3 3 L15 15 M15 3 L3 15" stroke="#e4e4e4" stroke-width="3.2" stroke-linecap="round"/></svg>
<span style="position:absolute;left:562.0px;top:729.30px;font:400 22.7px/1 'Liberation Mono',monospace;color:#d4d4d4;white-space:pre;letter-spacing:0.005px;"><span style="color:#d0d0d0"> 92% after chunk asset optimization SourceMapDevToolPlugin</span></span>
<span style="position:absolute;left:562.0px;top:756.60px;font:400 22.7px/1 'Liberation Mono',monospace;color:#d4d4d4;white-space:pre;letter-spacing:0.005px;"><span style="color:#d0d0d0"> 92% after chunk asset optimization SourceMapDevToolPlugin</span></span>
<span style="position:absolute;left:562.0px;top:811.60px;font:400 22.7px/1 'Liberation Mono',monospace;color:#d0d0d0;white-space:pre;letter-spacing:0.004px;"><span style="color:#d0d0d0">Date: </span><b style="color:#f4f4f4">2019-01-03T16:46:09.155Z</b><span style="color:#d0d0d0"> - Hash: </span><b style="color:#f4f4f4">3f2a</b></span>
<span style="position:absolute;left:562.0px;top:839.30px;font:400 22.7px/1 'Liberation Mono',monospace;color:#d4d4d4;white-space:pre;letter-spacing:0.005px;"><span style="color:#d0d0d0">4 unchanged chunks</span></span>
<span style="position:absolute;left:562.0px;top:866.10px;font:400 22.7px/1 'Liberation Mono',monospace;color:#d0d0d0;white-space:pre;letter-spacing:0.004px;"><span style="color:#d0d0d0">chunk {</span><b style="color:#f5e642">main</b><span style="color:#d0d0d0">} </span><b style="color:#19c48a">main.js, main.js.map</b><span style="color:#d0d0d0"> (main) 10.2 kB </span><b style="color:#f5e642">[initial]</b> <b style="color:#19c48a">[rendered]</b></span>
<span style="position:absolute;left:562.0px;top:893.40px;font:400 22.7px/1 'Liberation Mono',monospace;color:#d4d4d4;white-space:pre;letter-spacing:0.249px;"><span style="color:#2b7de0">ℹ</span><span style="color:#d0d0d0"> </span><span style="color:#6c6c6c">[</span><span style="color:#6c6c6c">wdm</span><span style="color:#6c6c6c">]</span><span style="color:#d0d0d0">: Compiled successfully.</span></span>
<div style="position:absolute;left:563px;top:918.5px;width:12.5px;height:25px;background:transparent;border:1.6px solid #d8d8d8;box-sizing:border-box"></div>
<div style="position:absolute;left:475.5px;top:623px;width:635px;height:68px;background:#232324;box-sizing:border-box;border:1px solid #454545;"></div>
<div style="position:absolute;left:476.5px;top:624px;width:633px;height:35.5px;background:#05294a;"></div>
<svg style="left:487px;top:625px;" width="28" height="32" viewBox="0 0 28 32"><g fill="none" stroke="#b684dc" stroke-width="2.4" stroke-linejoin="round"><path d="M14 2.2 L26 8.6 V23 L14 29.8 2 23 V8.6Z"/><path d="M2 8.6 L14 15.4 26 8.6 M14 15.4 V29.8"/></g></svg>
<span style="position:absolute;left:522px;top:630.72px;font:400 23.2px/1 'Liberation Mono',monospace;color:#d4d4d4;white-space:pre;letter-spacing:0.012px;"><b style="color:#2492ee">ngOn</b><span style="color:#e6e6e6">Init</span></span>
<svg style="left:487.5px;top:661.5px;overflow:hidden" width="27" height="30" viewBox="0 0 27 30"><path d="M2 24 V2 H25 V24" fill="#2c2c33" stroke="#d6d6d6" stroke-width="2.6"/><path d="M1 28 H26" stroke="#d6d6d6" stroke-width="2" stroke-dasharray="2.4 2.2"/></svg>
<span style="position:absolute;left:522px;top:667.22px;font:400 23.2px/1 'Liberation Mono',monospace;color:#d4d4d4;white-space:pre;letter-spacing:0.014px;"><span style="color:#dcdcdc">a-</span><b style="color:#2492ee">ng</b><span style="color:#dcdcdc">rx-data-e</span><b style="color:#2492ee">n</b><span style="color:#dcdcdc">tity-c</span><b style="color:#2492ee">o</b><span style="color:#dcdcdc">llection-data-serv…</span></span>
<div style="position:absolute;left:1112px;top:622.5px;width:637px;height:256.5px;background:#232324;box-sizing:border-box;border:1px solid #3e3e3e;"></div>
<span style="position:absolute;left:1123.7px;top:638.82px;font:400 23.2px/1 'Liberation Mono',monospace;color:#b4b4b4;white-space:pre;letter-spacing:0.015px;">(method) OnInit.ngOnInit(): void</span>
<svg style="left:1714px;top:636px;" width="13" height="13" viewBox="0 0 13 13"><path d="M2 2 L11 11 M11 2 L2 11" stroke="#e0e0e0" stroke-width="2.4" stroke-linecap="round"/></svg>
<span style="position:absolute;left:1123.7px;top:703.58px;font:400 22px/1 'Liberation Sans',sans-serif;color:#d2d2d2;white-space:pre;letter-spacing:-0.071px;transform:scaleY(1.05);transform-origin:0 84.65%;">A callback method that is invoked immediately after the default</span>
<span style="position:absolute;left:1123.7px;top:738.18px;font:400 22px/1 'Liberation Sans',sans-serif;color:#d2d2d2;white-space:pre;letter-spacing:0.019px;transform:scaleY(1.05);transform-origin:0 84.65%;">change detector has checked the directive&#x27;s data-bound</span>
<span style="position:absolute;left:1123.7px;top:772.78px;font:400 22px/1 'Liberation Sans',sans-serif;color:#d2d2d2;white-space:pre;letter-spacing:-0.158px;transform:scaleY(1.05);transform-origin:0 84.65%;">properties for the first time, and before any of the view or</span>
<span style="position:absolute;left:1123.7px;top:807.38px;font:400 22px/1 'Liberation Sans',sans-serif;color:#d2d2d2;white-space:pre;letter-spacing:-0.146px;transform:scaleY(1.05);transform-origin:0 84.65%;">content children have been checked. It is invoked only once</span>
<span style="position:absolute;left:1123.7px;top:841.18px;font:400 22px/1 'Liberation Sans',sans-serif;color:#d2d2d2;white-space:pre;letter-spacing:-0.094px;transform:scaleY(1.05);transform-origin:0 84.65%;">when the directive is instantiated.</span>
<svg style="left:1569px;top:736px;" width="16" height="26" viewBox="0 0 16 26"><path d="M1.2 1.2 V20.5 L5.6 16.4 8.6 23.6 11.6 22.3 8.6 15.3 14.6 15.1Z" fill="#111" stroke="#f4f4f4" stroke-width="1.5" stroke-linejoin="round"/></svg>
<div style="position:absolute;left:131px;top:949px;width:1658px;height:43px;background:#006bd3;"></div>
<svg style="left:159px;top:958.6px;" width="18" height="25.2" viewBox="0 0 20 28"><g fill="none" stroke="#f2f6fb" stroke-width="2.3"><circle cx="5" cy="4.6" r="2.7"/><circle cx="5" cy="23.4" r="2.7"/><circle cx="15.5" cy="7.6" r="2.7"/><path d="M5 7.3 V20.7 M15.5 10.3 C15.5 15.5 5 14 5 19.5"/></g></svg>
<span style="position:absolute;left:181.5px;top:959.78px;font:400 22px/1 'Liberation Sans',sans-serif;color:#f2f6fb;white-space:pre;letter-spacing:-0.125px;transform:scaleY(1.05);transform-origin:0 84.65%;">master</span>
<svg style="left:273px;top:960px;" width="22" height="22" viewBox="0 0 22 22"><circle cx="11" cy="11" r="10.6" fill="#f2f6fb"/><path d="M7 7 L15 15 M15 7 L7 15" stroke="#006bd3" stroke-width="2.9" stroke-linecap="round"/></svg>
<span style="position:absolute;left:303.4px;top:959.78px;font:400 22px/1 'Liberation Sans',sans-serif;color:#f2f6fb;white-space:pre;letter-spacing:-0.250px;transform:scaleY(1.05);transform-origin:0 84.65%;">2</span>
<svg style="left:325.3px;top:961px;" width="21" height="19.5" viewBox="0 0 26 24"><path d="M13 1.2 L25.2 22.8 H.8Z" fill="#f2f6fb" stroke="#f2f6fb" stroke-width="1.6" stroke-linejoin="round"/><path d="M13 8 V16" stroke="#006bd3" stroke-width="2.9"/><circle cx="13" cy="19.4" r="1.6" fill="#006bd3"/></svg>
<span style="position:absolute;left:355.6px;top:959.78px;font:400 22px/1 'Liberation Sans',sans-serif;color:#f2f6fb;white-space:pre;letter-spacing:0.150px;transform:scaleY(1.05);transform-origin:0 84.65%;">0</span>
<span style="position:absolute;left:788.75px;top:959.78px;font:400 22px/1 'Liberation Sans',sans-serif;color:#f2f6fb;white-space:pre;letter-spacing:-0.433px;transform:scaleY(1.05);transform-origin:0 84.65%;">Ln 16, Col 7</span>
<span style="position:absolute;left:931.9px;top:959.78px;font:400 22px/1 'Liberation Sans',sans-serif;color:#f2f6fb;white-space:pre;letter-spacing:-0.283px;transform:scaleY(1.05);transform-origin:0 84.65%;">Spaces: 2</span>
<span style="position:absolute;left:1057.5px;top:959.78px;font:400 22px/1 'Liberation Sans',sans-serif;color:#f2f6fb;white-space:pre;letter-spacing:0.414px;transform:scaleY(1.05);transform-origin:0 84.65%;">UTF-8</span>
<span style="position:absolute;left:1152.2px;top:959.78px;font:400 22px/1 'Liberation Sans',sans-serif;color:#f2f6fb;white-space:pre;letter-spacing:-1.144px;transform:scaleY(1.05);transform-origin:0 84.65%;">LF</span>
<span style="position:absolute;left:1206.25px;top:959.78px;font:400 22px/1 'Liberation Sans',sans-serif;color:#f2f6fb;white-space:pre;letter-spacing:0.041px;transform:scaleY(1.05);transform-origin:0 84.65%;">TypeScript</span>
<span style="position:absolute;left:1341.25px;top:959.78px;font:400 22px/1 'Liberation Sans',sans-serif;color:#f2f6fb;white-space:pre;letter-spacing:0.343px;transform:scaleY(1.05);transform-origin:0 84.65%;">3.2.2</span>
<span style="position:absolute;left:1454.4px;top:959.78px;font:400 22px/1 'Liberation Sans',sans-serif;color:#f2f6fb;white-space:pre;letter-spacing:-0.332px;transform:scaleY(1.05);transform-origin:0 84.65%;">TSLint</span>
<span style="position:absolute;left:1545.6px;top:959.78px;font:400 22px/1 'Liberation Sans',sans-serif;color:#f2f6fb;white-space:pre;letter-spacing:-0.226px;transform:scaleY(1.05);transform-origin:0 84.65%;">Prettier:</span>
<svg style="left:1421.6px;top:957px;" width="26" height="23.6" viewBox="0 0 26 24"><path d="M13 1.2 L25.2 22.8 H.8Z" fill="#f2f6fb" stroke="#f2f6fb" stroke-width="1.6" stroke-linejoin="round"/><path d="M13 8 V16" stroke="#006bd3" stroke-width="2.9"/><circle cx="13" cy="19.4" r="1.6" fill="#006bd3"/></svg>
<svg style="left:1626px;top:963px;" width="21" height="16.5" viewBox="0 0 21 16.5"><path d="M1.6 9.2 L7.2 14.6 19.4 2" fill="none" stroke="#f2f6fb" stroke-width="3.4"/></svg>
<svg style="left:1678px;top:957.3px;" width="26.5" height="26.5" viewBox="0 0 26 26"><circle cx="13" cy="13" r="12.6" fill="#f2f6fb"/><circle cx="8.8" cy="9.6" r="2" fill="#006bd3"/><circle cx="17.2" cy="9.6" r="2" fill="#006bd3"/><path d="M5.6 14.4 C7 22.4 19 22.4 20.4 14.4 C16 16.6 10 16.6 5.6 14.4Z" fill="#006bd3"/></svg>
<svg style="left:1716px;top:958px;" width="68" height="28" viewBox="0 0 68 28"><g opacity=".62"><path d="M3 8 C7 4 9 6 7.5 12 C6 19 8 23 12 19 C15 15.5 15.5 9 16.5 6.5 C16 14 16.5 21 21 19.5 C24 18 25 14 26 10" fill="none" stroke="#cfe2f7" stroke-width="2.6" stroke-linecap="round"/></g><path d="M30.5 4.2 C25.4 4.2 23.6 8.6 23.6 13.4 C23.6 17.6 22.4 19 20.6 20.4 H40.4 C38.6 19 37.4 17.6 37.4 13.4 C37.4 8.6 35.6 4.2 30.5 4.2Z" fill="#e9f1fb"/><path d="M28.2 22 a2.4 2.4 0 0 0 4.6 0Z" fill="#e9f1fb"/><text x="36" y="18.4" font-family="Liberation Sans" font-size="11.5" font-weight="700" fill="#c4d9f2" opacity=".75">demy</text></svg>
</div>
<div style="position:absolute;left:0px;top:992px;width:1920px;height:52px;background:#eff0f1;"></div>
<span style="position:absolute;left:10px;top:996.27px;font:400 12.2px/1 'Liberation Sans',sans-serif;color:#232629;white-space:pre;letter-spacing:0.500px;">01:14</span>
<span style="position:absolute;left:1880px;top:996.27px;font:400 12.2px/1 'Liberation Sans',sans-serif;color:#232629;white-space:pre;letter-spacing:0.400px;">03:25</span>
<div style="position:absolute;left:60px;top:996.3px;width:1802px;height:8.6px;background:linear-gradient(#b9bbbd,#d3d5d6);border-radius:4.3px"></div>
<div style="position:absolute;left:60px;top:996.3px;width:652px;height:8.6px;background:linear-gradient(#2a7bd0,#3a8ad8);border-radius:4.3px"></div>
<div style="position:absolute;left:4.2px;top:1012px;width:29.5px;height:29.5px;background:linear-gradient(#f4f5f5,#e9eaeb);box-sizing:border-box;border:1px solid #b6b8ba;border-radius:2.5px;box-shadow:0 1px 0 rgba(0,0,0,.10);"></div>
<svg style="left:4.2px;top:1012px;" width="29.5" height="29.5" viewBox="0 0 29.5 29.5"><path d="M8.5 6.2 L22 14.8 8.5 23.4Z" fill="#6d6f71"/></svg>
<div style="position:absolute;left:48.3px;top:1015.5px;width:23.5px;height:23.5px;background:linear-gradient(#f4f5f5,#e9eaeb);box-sizing:border-box;border:1px solid #b6b8ba;border-radius:2.5px;box-shadow:0 1px 0 rgba(0,0,0,.10);"></div>
<svg style="left:48.3px;top:1015.5px;" width="23.5" height="23.5" viewBox="0 0 23.5 23.5"><path d="M5.2 6.6 V17 " stroke="#6d6f71" stroke-width="2.8"/><path d="M12.4 6.6 V17 L6.4 11.8Z M18.6 6.6 V17 L12.6 11.8Z" fill="#6d6f71"/></svg>
<div style="position:absolute;left:74.3px;top:1015.5px;width:23.5px;height:23.5px;background:linear-gradient(#f4f5f5,#e9eaeb);box-sizing:border-box;border:1px solid #b6b8ba;border-radius:2.5px;box-shadow:0 1px 0 rgba(0,0,0,.10);"></div>
<svg style="left:74.3px;top:1015.5px;" width="23.5" height="23.5" viewBox="0 0 23.5 23.5"><rect x="6.8" y="6.8" width="10" height="10" fill="#6d6f71"/></svg>
<div style="position:absolute;left:100.3px;top:1015.5px;width:23.5px;height:23.5px;background:linear-gradient(#f4f5f5,#e9eaeb);box-sizing:border-box;border:1px solid #b6b8ba;border-radius:2.5px;box-shadow:0 1px 0 rgba(0,0,0,.10);"></div>
<svg style="left:100.3px;top:1015.5px;" width="23.5" height="23.5" viewBox="0 0 23.5 23.5"><path d="M18.4 6.6 V17" stroke="#6d6f71" stroke-width="2.8"/><path d="M11.2 6.6 V17 L17.2 11.8Z M5 6.6 V17 L11 11.8Z" fill="#6d6f71"/></svg>
<div style="position:absolute;left:138.4px;top:1015.5px;width:23.5px;height:23.5px;background:linear-gradient(#f4f5f5,#e9eaeb);box-sizing:border-box;border:1px solid #b6b8ba;border-radius:2.5px;box-shadow:0 1px 0 rgba(0,0,0,.10);"></div>
<svg style="left:138.4px;top:1015.5px;" width="23.5" height="23.5" viewBox="0 0 23.5 23.5"><path d="M5.2 10 V5.8 H9.6 M14 5.8 H18.4 V10 M18.4 13.6 V17.8 H14 M9.6 17.8 H5.2 V13.6" fill="none" stroke="#6d6f71" stroke-width="2.8"/></svg>
<div style="position:absolute;left:164.4px;top:1015.5px;width:23.5px;height:23.5px;background:linear-gradient(#f4f5f5,#e9eaeb);box-sizing:border-box;border:1px solid #b6b8ba;border-radius:2.5px;box-shadow:0 1px 0 rgba(0,0,0,.10);"></div>
<svg style="left:164.4px;top:1015.5px;" width="23.5" height="23.5" viewBox="0 0 23.5 23.5"><path d="M6.6 4.8 V18.8 M11.8 4.8 V18.8 M17 4.8 V18.8" stroke="#6d6f71" stroke-width="2.3"/><path d="M4.4 8 H8.8 M9.6 14.6 H14 M14.8 9.6 H19.2" stroke="#6d6f71" stroke-width="3.4"/></svg>
<div style="position:absolute;left:202.4px;top:1015.5px;width:23.5px;height:23.5px;background:linear-gradient(#f4f5f5,#e9eaeb);box-sizing:border-box;border:1px solid #b6b8ba;border-radius:2.5px;box-shadow:0 1px 0 rgba(0,0,0,.10);"></div>
<svg style="left:202.4px;top:1015.5px;" width="23.5" height="23.5" viewBox="0 0 23.5 23.5"><path d="M5 7 H18 M5 11 H18 M5 15 H13" stroke="#6d6f71" stroke-width="2.6"/><path d="M14.6 13.4 L19.6 16.2 14.6 19Z" fill="#6d6f71"/></svg>
<div style="position:absolute;left:228.4px;top:1015.5px;width:23.5px;height:23.5px;background:linear-gradient(#f4f5f5,#e9eaeb);box-sizing:border-box;border:1px solid #b6b8ba;border-radius:2.5px;box-shadow:0 1px 0 rgba(0,0,0,.10);"></div>
<svg style="left:228.4px;top:1015.5px;" width="23.5" height="23.5" viewBox="0 0 23.5 23.5"><path d="M5.6 11 V9.8 A2.4 2.4 0 0 1 8 7.4 H15.4 M18 12.6 V13.8 A2.4 2.4 0 0 1 15.6 16.2 H8.2" fill="none" stroke="#6d6f71" stroke-width="2.6"/><path d="M14.8 4.2 L18.8 7.4 14.8 10.6Z M8.8 13 L4.8 16.2 8.8 19.4Z" fill="#6d6f71"/></svg>
<div style="position:absolute;left:254.4px;top:1015.5px;width:23.5px;height:23.5px;background:linear-gradient(#f4f5f5,#e9eaeb);box-sizing:border-box;border:1px solid #b6b8ba;border-radius:2.5px;box-shadow:0 1px 0 rgba(0,0,0,.10);"></div>
<svg style="left:254.4px;top:1015.5px;" width="23.5" height="23.5" viewBox="0 0 23.5 23.5"><path d="M4.8 7 H7.4 L14.6 16.4 H17 M4.8 16.4 H7.4 L9.4 13.8 M12.6 9.6 L14.6 7 H17" fill="none" stroke="#6d6f71" stroke-width="2.6"/><path d="M15.8 4 L19.6 7 15.8 10Z M15.8 13.4 L19.6 16.4 15.8 19.4Z" fill="#6d6f71"/></svg>
<svg style="left:1819px;top:1028px;" width="17" height="14" viewBox="0 0 17 14"><path d="M1 4.6 H3.6 L7.4 1 V13 L3.6 9.4 H1Z" fill="#757575"/><g fill="none" stroke="#f08c1e" stroke-width="1.3" stroke-linecap="round"><path d="M9.2 4.6 Q10.6 7 9.2 9.4"/><path d="M11.2 2.8 Q13.6 7 11.2 11.2"/><path d="M13.2 1.2 Q16.4 7 13.2 12.8"/></g></svg>
<svg style="left:1840px;top:1018px;" width="76" height="24" viewBox="0 0 76 24"><defs><linearGradient id="vg" x1="0" x2="1" y1="0" y2="0"><stop offset="0" stop-color="#8fdc8f"/><stop offset="1" stop-color="#22c522"/></linearGradient></defs><path d="M1.6 21.6 L50.8 8.2 V21.6Z" fill="url(#vg)"/><path d="M50.8 8.2 L72.6 2.2 V21.6 H50.8Z" fill="#f6f7f7"/><path d="M1.6 20.6 L72.2 1.6 A1 1 0 0 1 73.4 2.6 V21 A1 1 0 0 1 72.4 22 H2 A1 1 0 0 1 1.6 20.6Z" fill="none" stroke="#747474" stroke-width="1.1"/></svg>
<span style="position:absolute;left:1851.5px;top:1020.29px;font:400 8.4px/1 'Liberation Sans',sans-serif;color:#8b90a0;white-space:pre;letter-spacing:0.245px;">85%</span>
<div style="position:absolute;left:0px;top:1041px;width:1920px;height:3px;background:linear-gradient(rgba(0,0,0,0),rgba(0,0,0,.13));"></div>
<div style="position:absolute;left:0px;top:1044px;width:1920px;height:36px;background:#dde8e8;"></div>
<div style="position:absolute;left:0px;top:1044px;width:1920px;height:1px;background:#c3c8ca;"></div>
<svg style="left:1px;top:1044.5px;" width="34" height="34" viewBox="0 0 34 34"><circle cx="17" cy="17" r="15" fill="none" stroke="#202326" stroke-width="2.2"/><path d="M4 12.4 C5.4 8.6 8.6 6 11.6 5.4 L10.4 7.6 C15 6.4 21.6 6.8 25.6 10 C28.8 12.6 29.2 17.2 27.8 19.4 C26 22.4 20.6 23.4 15.6 21.6 C20.6 25 25.4 24.8 28.4 23 C25.4 27.2 19 28.6 13 27 C7 25.2 3 19 4 12.4Z" fill="#202326"/><circle cx="22.2" cy="14.6" r="4.5" fill="#e3ecec"/><circle cx="22.2" cy="14.6" r="2.9" fill="#202326"/><circle cx="22.8" cy="14.2" r="1.5" fill="#e3ecec"/><path d="M12.6 16.8 C16 20.8 23 22 28.4 19.4" fill="none" stroke="#e3ecec" stroke-width="1.5"/></svg>
<svg style="left:42.0px;top:1049.0px;" width="26" height="26" viewBox="0 0 32 32"><defs><linearGradient id="torg" x1="0" y1="0" x2="0" y2="1"><stop offset="0" stop-color="#9326cc"/><stop offset="1" stop-color="#560f7c"/></linearGradient></defs><circle cx="16" cy="16" r="13.5" fill="url(#torg)" /><path d="M16 4.5 A11.5 11.5 0 0 1 16 27.5" fill="none" stroke="#f0dcfa" stroke-width="2"/><path d="M16 8.5 A7.5 7.5 0 0 1 16 23.5" fill="none" stroke="#f0dcfa" stroke-width="2"/><path d="M16 12.4 A3.6 3.6 0 0 1 16 19.6" fill="none" stroke="#f0dcfa" stroke-width="2"/></svg>
<svg style="left:76.0px;top:1049.0px;" width="26" height="26" viewBox="0 0 32 32"><path d="M16 16 L4.3 9.2 A13.5 13.5 0 0 1 27.7 9.2Z" fill="#ea4335"/><path d="M16 16 L27.7 9.2 A13.5 13.5 0 0 1 16 29.5Z" fill="#fbbc05"/><path d="M16 16 L16 29.5 A13.5 13.5 0 0 1 4.3 9.2Z" fill="#34a853"/><circle cx="16" cy="16" r="6.2" fill="#fff" /><circle cx="16" cy="16" r="4.9" fill="#4285f4" /></svg>
<svg style="left:111.2px;top:1050.2px;" width="23.6" height="23.6" viewBox="0 0 32 32"><rect x="4" y="5" width="24" height="23" rx="1.5" fill="#2f3439"/><path d="M11 11 L16.5 16.5 11 22" fill="none" stroke="#8f979e" stroke-width="1.8"/></svg>
<svg style="left:144.7px;top:1049.7px;" width="24.6" height="24.6" viewBox="0 0 32 32"><rect x="4" y="5" width="24" height="23" rx="1.5" fill="#31393f"/><path d="M4 28 V19 L8 12 12 18 16 15 20 20 24 17 28 21 V28Z" fill="#5fbf86"/></svg>
<svg style="left:177.75px;top:1048.75px;" width="26.5" height="26.5" viewBox="0 0 32 32"><rect x="3" y="4" width="26" height="19" rx="1.5" fill="#272b30"/><rect x="7" y="8" width="18" height="11" fill="none" stroke="#8a8f94" stroke-width="1" stroke-dasharray="2 1.6"/><rect x="12" y="23" width="8" height="3" fill="#9aa0a5"/><rect x="9" y="26" width="14" height="1.6" fill="#c2c6c9"/><circle cx="23.5" cy="26" r="2" fill="none" stroke="#e03a3a" stroke-width="1.3"/><circle cx="28" cy="26" r="2" fill="none" stroke="#e03a3a" stroke-width="1.3"/></svg>
<svg style="left:212.0px;top:1049.0px;" width="26" height="26" viewBox="0 0 32 32"><rect x="4" y="5" width="24" height="23" rx="1.5" fill="#2a2e33"/><path d="M7 12.5 H25 M7 20.5 H25" stroke="#4f565c" stroke-width="2"/><path d="M7 12.5 H21 M7 20.5 H13" stroke="#e6e9eb" stroke-width="2"/><circle cx="21" cy="12.5" r="2.3" fill="#fff" /><circle cx="13" cy="20.5" r="2.3" fill="#fff" /></svg>
<svg style="left:246.85px;top:1049.85px;" width="24.3" height="24.3" viewBox="0 0 32 32"><circle cx="16" cy="16" r="12.5" fill="#5fbb5a" /><path d="M9 21 V15 C9 12 12 11 15 12 L20 10 22 11 23.4 14 21.8 15 20.4 14 V21 H18.6 V17 H12.6 V21Z" fill="#f3f7f0"/></svg>
<svg style="left:279.0px;top:1048.0px;" width="28" height="28" viewBox="0 0 32 32"><rect x="7" y="4" width="18" height="25" rx="1.6" fill="#6f7478"/><rect x="7" y="4" width="18" height="14" rx="1.6" fill="#46a546"/><text x="16" y="14.6" text-anchor="middle" font-family="Liberation Sans" font-size="7.4" font-weight="700" fill="#d6f0d0">nqq</text></svg>
<svg style="left:315.0px;top:1050.0px;" width="24" height="24" viewBox="0 0 32 32"><circle cx="16" cy="16" r="12.5" fill="#2c95e8" /><path d="M7.6 16 C12 10.6 17 10 23.4 10.8 C20 12.4 18 14.2 17.4 16.4 C20 16 22 16.4 24.4 17.6 C20 18 17 19.6 13.6 23.6 C14.6 20 14.2 18 12.4 16.4 C10.6 15.8 9 15.8 7.6 16Z" fill="#f2f7fc"/></svg>
<svg style="left:350.0px;top:1051.0px;" width="22" height="22" viewBox="0 0 32 32"><path d="M6.4 11 A11.4 11.4 0 0 1 27 13.4 M27 19 A11.4 11.4 0 0 1 6 21" fill="none" stroke="#505659" stroke-width="4.4"/><circle cx="16.5" cy="16" r="6.4" fill="#e9f0ee" stroke="#2fa98c" stroke-width="3.4"/></svg>
<svg style="left:381.0px;top:1048.0px;" width="28" height="28" viewBox="0 0 32 32"><path d="M5.4 10 C7 4.8 11 7.8 12.6 10.4 C16 9 20 9.2 22.6 10.6 C24 8 28.4 5.6 28.4 10.4 C28.4 15.6 25 19 19.6 20.6 C13.6 22.2 8 20 6.2 15.6 C5.4 13.6 5 11.6 5.4 10Z" fill="#7b6a58"/><circle cx="12.2" cy="13.6" r="3.1" fill="#fff" /><circle cx="18.8" cy="13.6" r="3.1" fill="#fff" /><circle cx="12.6" cy="14" r="1.3" fill="#111" /><circle cx="18.4" cy="14" r="1.3" fill="#111" /><path d="M3.4 17.6 C6 16.6 9 17.6 10 19.6 C8.6 21.6 5.6 21.6 3.4 20.4Z" fill="#23201d"/><path d="M18 20.6 L28.6 26.6" stroke="#c98a2b" stroke-width="1.8"/></svg>
<svg style="left:416.2px;top:1049.2px;" width="25.6" height="25.6" viewBox="0 0 32 32"><rect x="3.4" y="4" width="25" height="24.6" rx="5.4" fill="#15120f"/><path d="M5.4 8.6 C10 5.6 22 5.6 26.4 8.6 L26.6 12.6 C20 9.6 12 9.6 5.4 12.8Z" fill="#f47b20"/><path d="M5.4 20 C12 24 20 24 26.6 20 L26.4 24 C22 26.8 10 26.8 5.6 24Z" fill="#f47b20"/><path d="M6 16.4 C11 11.6 21 11.6 26 16.4 C21 20.6 11 20.6 6 16.4Z" fill="#f3f3ec"/><circle cx="16" cy="16.2" r="3.5" fill="#5bb532" /><circle cx="16" cy="16.2" r="1.5" fill="#111" /></svg>
<svg style="left:451.0px;top:1050.0px;" width="24" height="24" viewBox="0 0 32 32"><circle cx="16" cy="16" r="12.6" fill="#f1f6f5" stroke="#c7d0d1" stroke-width="1"/><path d="M7.4 12 A9.6 9.6 0 0 1 24.6 12" fill="none" stroke="#2aa86c" stroke-width="1.8"/><path d="M24.6 20 A9.6 9.6 0 0 1 7.4 20" fill="none" stroke="#2aa86c" stroke-width="1.8"/><path d="M11 11.4 L20.4 16 11 20.6" fill="none" stroke="#2f7fd6" stroke-width="2"/><path d="M21.4 12.6 L15.4 16 21.4 19.4" fill="none" stroke="#2aa86c" stroke-width="1.8"/></svg>
<svg style="left:484.6px;top:1049.6px;" width="24.8" height="24.8" viewBox="0 0 32 32"><rect x="4.4" y="5" width="23.4" height="23" rx="1.4" fill="#2e3b46"/><path d="M21.6 8.6 L11.6 17.6 8.6 15.4 7.6 16 10.6 18.6 7.6 21.2 8.6 21.8 11.6 19.6 21.6 28.2 24.4 27 V10Z" transform="translate(0 -2)" fill="#2489ca"/><path d="M21.4 13.4 V23.4 L15.4 18.4Z" transform="translate(0 -2)" fill="#2e3b46"/></svg>
<svg style="left:517.0px;top:1048.0px;" width="28" height="28" viewBox="0 0 32 32"><rect x="3.6" y="3.4" width="25" height="25.6" rx="3.4" fill="#2c5679" stroke="#52789a" stroke-width="1"/><path d="M8 11 C11 9 15 10.6 17.4 13.6 C19.6 16.6 20.8 19.8 24.6 22.6 C22.4 22.6 21.4 23.4 22.4 25.4 C19.4 24.6 18.4 22 17.4 19.6 C16.2 16.8 15 15.2 12.6 14.6 C12.8 17.6 12 20 10.4 22" fill="none" stroke="#dfe8ef" stroke-width="1.2"/><path d="M22.4 6 L25.6 9.2 M24.8 5.4 L26.2 6.8" stroke="#dfe8ef" stroke-width="1.7"/></svg>
<svg style="left:552.25px;top:1049.25px;" width="25.5" height="25.5" viewBox="0 0 32 32"><path d="M3.6 16 C8 7.6 24 7.6 28.4 16 C24 24.4 8 24.4 3.6 16Z" fill="#d9479a"/><circle cx="16" cy="16" r="6.6" fill="#f3eef1" /><circle cx="14" cy="13.8" r="2" fill="#fff" /></svg>
<svg style="left:588.0px;top:1051.0px;" width="22" height="22" viewBox="0 0 32 32"><circle cx="16" cy="16" r="12.4" fill="#2e86e6" /><circle cx="11.4" cy="16" r="3.5" fill="none" stroke="#eaf3fd" stroke-width="1.8"/><circle cx="20.6" cy="16" r="3.5" fill="none" stroke="#eaf3fd" stroke-width="1.8"/><path d="M14.9 9.6 V19.4 M17.1 12.6 V22.4" stroke="#eaf3fd" stroke-width="1.8"/></svg>
<svg style="left:621.4px;top:1050.4px;" width="23.2" height="23.2" viewBox="0 0 32 32"><path d="M6 21 V15.4 A10 10 0 0 1 26 15.4 V21" fill="none" stroke="#1e58c8" stroke-width="3.6"/><rect x="3.6" y="17" width="5.6" height="10.4" rx="2.2" fill="#1a3f9e"/><rect x="22.8" y="17" width="5.6" height="10.4" rx="2.2" fill="#1a3f9e"/><path d="M10.6 26 L12.8 14 15 24 17 12.4 19.2 24 21.4 16 V27 H10.6Z" fill="#f5a41c"/><path d="M14.4 27 L16.4 15 18.4 27Z" fill="#e6452a"/></svg>
<svg style="left:654.2px;top:1049.2px;" width="25.6" height="25.6" viewBox="0 0 32 32"><path d="M4 19.6 L15.6 10.6 H9.6 V8 H19 L27 14" fill="none" stroke="#ea7a1c" stroke-width="2.6" stroke-linejoin="round"/><circle cx="19.6" cy="17.8" r="8" fill="#ea7a1c" /><circle cx="19.6" cy="17.8" r="4.7" fill="#f6f8fa" /><circle cx="19.6" cy="17.8" r="2.9" fill="#2a64b4" /></svg>
<svg style="left:687.0px;top:1048.0px;" width="28" height="28" viewBox="0 0 32 32"><path d="M3.4 8 L21 4.6 V8 H28.6 V27.4 H3.4Z" fill="#a4121b"/><rect x="3.4" y="9" width="25.2" height="18.4" fill="#c4161f"/><text x="16.4" y="23.4" text-anchor="middle" font-family="Liberation Sans" font-size="12.6" font-weight="700" font-style="italic" fill="#f6dfe0">Fz</text></svg>
<svg style="left:722.5px;top:1049.0px;" width="25" height="25" viewBox="0 0 32 32"><defs><radialGradient id="ffg735" cx=".78" cy=".12" r="1.05"><stop offset="0" stop-color="#fff36a"/><stop offset=".3" stop-color="#ffbd2e"/><stop offset=".55" stop-color="#ff7a2a"/><stop offset=".8" stop-color="#f83a4a"/><stop offset="1" stop-color="#e0218a"/></radialGradient><linearGradient id="ffg735b" x1="0" y1="0" x2="1" y2="1"><stop offset="0" stop-color="#b45cf5"/><stop offset="1" stop-color="#5a4fd8"/></linearGradient></defs><path d="M17.6 4.6 C18.4 2.4 19.8 1.2 21.2 .4 C21.6 3 23.4 4.6 25.4 6.6 C29.2 10.2 30.4 15 29 20 C27.4 25.8 22 29.8 16 29.6 C9 29.4 3.2 24 3 17 C2.9 12.6 4.4 9.6 6.4 7.4 C6.6 8.6 7 9.6 7.6 10.4 C8.4 8.6 9.6 7.4 10.6 6.8 C10.8 8 11.4 8.8 12.2 9.4 C13.6 7.2 15.4 5.6 17.6 4.6Z" fill="url(#ffg735)"/><circle cx="16.2" cy="17.2" r="6.1" fill="url(#ffg735b)" /><path d="M7.4 12.6 C9.6 10.8 12.6 10.8 14.8 12.4 C16.6 12 18.4 12.6 19.4 14 C17.4 13.6 16 14.2 15 15.2 C13.4 16.8 11.4 16.6 10.2 16.2 C9.8 19.6 12.4 22.6 16 23.2 C19.6 23.8 22.6 21.8 23.6 19 C24 23 20.4 26.6 15.6 26.4 C10.6 26.2 6.8 22 7 17.2 C7 15.4 7 14 7.4 12.6Z" fill="#ff9a26" opacity=".92"/></svg>
<div style="position:absolute;left:753.2px;top:1046px;width:202.4px;height:34px;background:#c4cdcf;"></div>
<div style="position:absolute;left:753.2px;top:1046px;width:202.4px;height:2.2px;background:#a8b0b3;"></div>
<svg style="left:758px;top:1051px;" width="22" height="22" viewBox="0 0 22 22"><path d="M1 3.4 H8 L10 5.4 H21 V20 H1Z" fill="#1d6fc4"/><path d="M1 8 H21 V20 H1Z" fill="#3d9bea"/></svg>
<span style="position:absolute;left:786px;top:1056.05px;font:400 12.7px/1 'Liberation Sans',sans-serif;color:#31363b;white-space:pre;letter-spacing:0.277px;">60b84280-c743-4fc9-b58...</span>
<div style="position:absolute;left:958px;top:1046px;width:203px;height:34px;background:#a6d4ef;"></div>
<div style="position:absolute;left:958px;top:1046px;width:203px;height:2.2px;background:#3daee9;"></div>
<svg style="left:964.6px;top:1052.4px;" width="18.6" height="20.4" viewBox="0 0 20 22"><path d="M2.75 13.2 H17.25 L19.8 21.5 H.2Z" fill="#f18a12"/><path d="M8.6 .6 Q10 -.2 11.4 .6 L15.6 16.6 Q10 19.6 4.4 16.6Z" fill="#f5951c"/><path d="M7.52 4.7 H12.48 L13.47 8.5 H6.53Z M5.42 12.7 H14.58 L15.6 16.6 Q10 19.6 4.4 16.6Z" fill="#fbfaf6"/></svg>
<span style="position:absolute;left:991px;top:1056.05px;font:400 12.7px/1 'Liberation Sans',sans-serif;color:#31363b;white-space:pre;letter-spacing:0.380px;">20. Working with Lifecycl...</span>
<svg style="left:1479.5px;top:1044.0px;" width="35" height="35" viewBox="0 0 32 32"><defs><radialGradient id="ffg1497" cx=".78" cy=".12" r="1.05"><stop offset="0" stop-color="#fff36a"/><stop offset=".3" stop-color="#ffbd2e"/><stop offset=".55" stop-color="#ff7a2a"/><stop offset=".8" stop-color="#f83a4a"/><stop offset="1" stop-color="#e0218a"/></radialGradient><linearGradient id="ffg1497b" x1="0" y1="0" x2="1" y2="1"><stop offset="0" stop-color="#b45cf5"/><stop offset="1" stop-color="#5a4fd8"/></linearGradient></defs><path d="M17.6 4.6 C18.4 2.4 19.8 1.2 21.2 .4 C21.6 3 23.4 4.6 25.4 6.6 C29.2 10.2 30.4 15 29 20 C27.4 25.8 22 29.8 16 29.6 C9 29.4 3.2 24 3 17 C2.9 12.6 4.4 9.6 6.4 7.4 C6.6 8.6 7 9.6 7.6 10.4 C8.4 8.6 9.6 7.4 10.6 6.8 C10.8 8 11.4 8.8 12.2 9.4 C13.6 7.2 15.4 5.6 17.6 4.6Z" fill="url(#ffg1497)"/><circle cx="16.2" cy="17.2" r="6.1" fill="url(#ffg1497b)" /><path d="M7.4 12.6 C9.6 10.8 12.6 10.8 14.8 12.4 C16.6 12 18.4 12.6 19.4 14 C17.4 13.6 16 14.2 15 15.2 C13.4 16.8 11.4 16.6 10.2 16.2 C9.8 19.6 12.4 22.6 16 23.2 C19.6 23.8 22.6 21.8 23.6 19 C24 23 20.4 26.6 15.6 26.4 C10.6 26.2 6.8 22 7 17.2 C7 15.4 7 14 7.4 12.6Z" fill="#ff9a26" opacity=".92"/></svg>
<svg style="left:1522px;top:1051px;" width="20" height="22" viewBox="0 0 20 22"><path d="M10 3.6 C7 3.6 5.9 6.2 5.9 9.2 C5.9 12.6 4.8 13.9 3.6 15.1 H16.4 C15.2 13.9 14.1 12.6 14.1 9.2 C14.1 6.2 13 3.6 10 3.6Z" fill="none" stroke="#26292c" stroke-width="1.45" stroke-linejoin="round"/><path d="M8 17.2 a2 1.9 0 0 0 4 0Z" fill="#26292c"/><g fill="none" stroke="#26292c" stroke-width="1.05" stroke-linecap="round"><path d="M4.6 3.6 Q3.2 5.2 3.2 7.4 M2.9 2.6 Q1.2 4.8 1.2 7.6 M15.4 3.6 Q16.8 5.2 16.8 7.4 M17.1 2.6 Q18.8 4.8 18.8 7.6"/></g></svg>
<div style="position:absolute;left:1547px;top:1051px;width:22px;height:22px;background:#ef443b;"></div>
<svg style="left:1547px;top:1051px;" width="22" height="22" viewBox="0 0 22 22"><rect x="4.4" y="7.4" width="7.2" height="7.2" transform="rotate(45 8 11)" fill="#fff"/><path d="M12.2 6.4 L17.4 11 12.2 15.6" fill="none" stroke="#fff" stroke-width="2.1"/></svg>
<span style="position:absolute;left:1576.4px;top:1057.10px;font:700 12.4px/1 'Liberation Mono',monospace;color:#474c9c;white-space:pre;letter-spacing:0.362px;">EN</span>
<svg style="left:1601px;top:1052.8px;" width="18" height="18" viewBox="0 0 18 18"><circle cx="9" cy="9" r="7.8" fill="none" stroke="#26292c" stroke-width="1.2"/><path d="M7 5.6 V12.4 M11 5.6 V12.4" stroke="#26292c" stroke-width="1.8"/></svg>
<svg style="left:1628px;top:1053px;" width="16" height="18" viewBox="0 0 16 18"><path d="M6.8 1 H9.2 L12.6 13.4 H3.4Z" fill="none" stroke="#26292c" stroke-width="1.2"/><path d="M5.4 6.2 H10.6 L11.4 9 H4.6Z" fill="#26292c"/><path d="M.8 15.2 H15.2 V16.8 H.8Z" fill="#26292c"/></svg>
<svg style="left:1654px;top:1052.6px;" width="16" height="19" viewBox="0 0 16 19"><rect x="1.6" y="4" width="12.8" height="13.6" fill="none" stroke="#26292c" stroke-width="1.2"/><rect x="4.4" y="1.4" width="7.2" height="4.6" fill="#26292c"/><path d="M4.2 9.4 H11.8 M4.2 12 H11.8 M4.2 14.6 H8.6" stroke="#26292c" stroke-width="1.1"/></svg>
<svg style="left:1679px;top:1053px;" width="18" height="18" viewBox="0 0 18 18"><path d="M1 6.4 H3.8 L8.2 2 V16 L3.8 11.6 H1Z" fill="#26292c"/><path d="M10.4 5.6 Q12.4 9 10.4 12.4 M12.6 3.4 Q15.8 9 12.6 14.6" fill="none" stroke="#26292c" stroke-width="1.3"/></svg>
<svg style="left:1702.7px;top:1054.6px;" width="21.6" height="13.4" viewBox="0 0 21.6 13.4"><rect x="0" y="0.00" width="21.6" height="1.03" fill="#d8232f"/><rect x="0" y="1.03" width="21.6" height="1.03" fill="#ffffff"/><rect x="0" y="2.06" width="21.6" height="1.03" fill="#d8232f"/><rect x="0" y="3.09" width="21.6" height="1.03" fill="#ffffff"/><rect x="0" y="4.12" width="21.6" height="1.03" fill="#d8232f"/><rect x="0" y="5.15" width="21.6" height="1.03" fill="#ffffff"/><rect x="0" y="6.18" width="21.6" height="1.03" fill="#d8232f"/><rect x="0" y="7.21" width="21.6" height="1.03" fill="#ffffff"/><rect x="0" y="8.24" width="21.6" height="1.03" fill="#d8232f"/><rect x="0" y="9.27" width="21.6" height="1.03" fill="#ffffff"/><rect x="0" y="10.30" width="21.6" height="1.03" fill="#d8232f"/><rect x="0" y="11.33" width="21.6" height="1.03" fill="#ffffff"/><rect x="0" y="12.36" width="21.6" height="1.03" fill="#d8232f"/><rect x="0" y="0" width="9.4" height="7.2" fill="#2d3a8c"/><g fill="#e8eaf6"><rect x="1.0" y="1.0" width=".8" height=".8"/><rect x="1.0" y="2.8" width=".8" height=".8"/><rect x="1.0" y="4.6" width=".8" height=".8"/><rect x="1.0" y="6.4" width=".8" height=".8"/><rect x="2.9" y="1.0" width=".8" height=".8"/><rect x="2.9" y="2.8" width=".8" height=".8"/><rect x="2.9" y="4.6" width=".8" height=".8"/><rect x="2.9" y="6.4" width=".8" height=".8"/><rect x="4.8" y="1.0" width=".8" height=".8"/><rect x="4.8" y="2.8" width=".8" height=".8"/><rect x="4.8" y="4.6" width=".8" height=".8"/><rect x="4.8" y="6.4" width=".8" height=".8"/><rect x="6.7" y="1.0" width=".8" height=".8"/><rect x="6.7" y="2.8" width=".8" height=".8"/><rect x="6.7" y="4.6" width=".8" height=".8"/><rect x="6.7" y="6.4" width=".8" height=".8"/></g></svg>
<svg style="left:1729.4px;top:1052.4px;" width="21" height="19" viewBox="0 0 21 19"><g fill="none" stroke-linecap="round"><path d="M2 7.4 A12 12 0 0 1 19 7.4" stroke="#8f9396" stroke-width="1.2"/><path d="M4.6 10.4 A8.4 8.4 0 0 1 16.4 10.4" stroke="#26292c" stroke-width="1.3"/><path d="M7.2 13.2 A4.8 4.8 0 0 1 13.8 13.2" stroke="#26292c" stroke-width="1.3"/></g><circle cx="10.5" cy="16" r="1.5" fill="none" stroke="#26292c" stroke-width="1"/></svg>
<svg style="left:1760px;top:1059.6px;" width="12" height="6" viewBox="0 0 12 6"><path d="M6 0 L12 6 H0Z" fill="#26292c"/></svg>
<span style="position:absolute;left:1790px;top:1051.64px;font:400 22.4px/1 'Liberation Sans',sans-serif;color:#26292c;white-space:pre;letter-spacing:0.121px;">1:54 AM</span>
<div style="position:absolute;left:1889.5px;top:1050.5px;width:24.5px;height:22.5px;background:transparent;box-sizing:border-box;border:1.2px solid #33373a;"></div>
<div style="position:absolute;left:1892.5px;top:1067.6px;width:18.5px;height:1.4px;background:#33373a;"></div>
<svg style="left:5.9px;top:5.2px;" width="16" height="18" viewBox="0 0 20 22"><path d="M2.75 13.2 H17.25 L19.8 21.5 H.2Z" fill="#f18a12"/><path d="M8.6 .6 Q10 -.2 11.4 .6 L15.6 16.6 Q10 19.6 4.4 16.6Z" fill="#f5951c"/><path d="M7.52 4.7 H12.48 L13.47 8.5 H6.53Z M5.42 12.7 H14.58 L15.6 16.6 Q10 19.6 4.4 16.6Z" fill="#fbfaf6"/></svg>
<div style="position:absolute;left:0px;top:28px;width:1920px;height:1px;background:#3c444c;"></div>
<svg style="left:1851px;top:8px;" width="14" height="12" viewBox="0 0 14 12"><path d="M1.6 3.4 L7 8.8 12.4 3.4" fill="none" stroke="#fcfcfc" stroke-width="1.25"/></svg>
<svg style="left:1875px;top:7px;" width="14" height="14" viewBox="0 0 14 14"><rect x="3.4" y="3.4" width="7.2" height="7.2" transform="rotate(45 7 7)" fill="none" stroke="#fcfcfc" stroke-width="1.25"/></svg>
<svg style="left:1896px;top:4.2px;" width="19" height="19" viewBox="0 0 19 19"><circle cx="9.5" cy="9.5" r="9.1" fill="#fcfcfc"/><path d="M5.4 5.4 L13.6 13.6 M13.6 5.4 L5.4 13.6" stroke="#3f4750" stroke-width="1.2"/></svg>
</body></html>
